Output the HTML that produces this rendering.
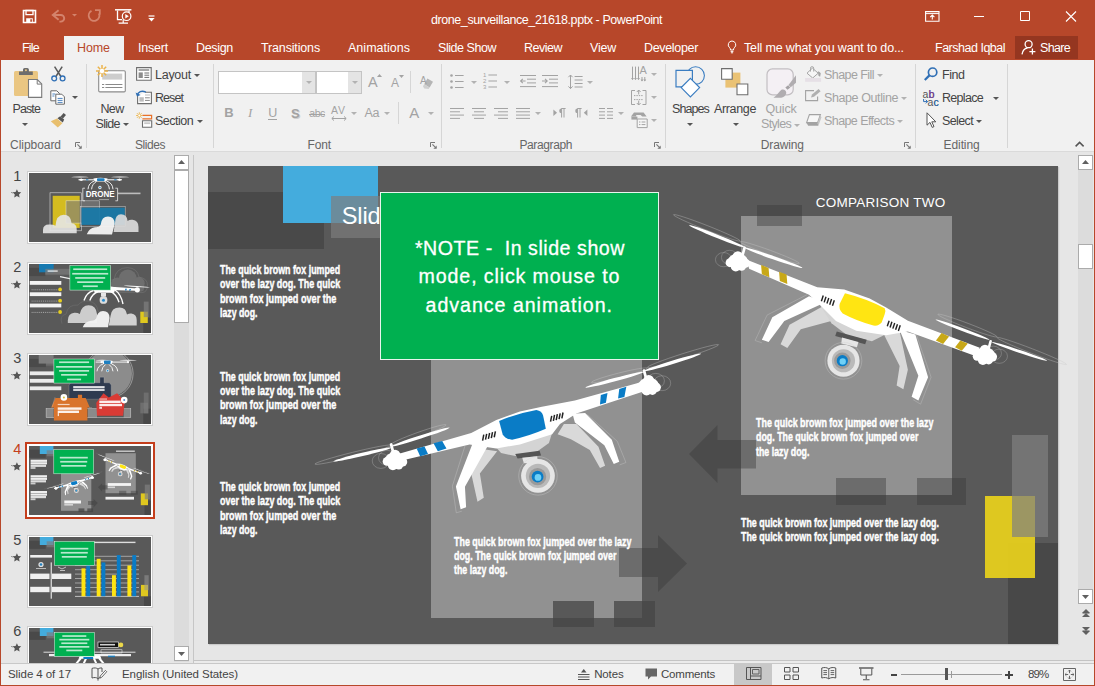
<!DOCTYPE html>
<html lang="en">
<head>
<meta charset="utf-8">
<title>drone_surveillance_21618.pptx - PowerPoint</title>
<style>
*{box-sizing:border-box;margin:0;padding:0}
html,body{width:1095px;height:686px;overflow:hidden;background:#e6e6e6}
body{font-family:"Liberation Sans",sans-serif;font-size:12px;color:#444;position:relative}
.abs{position:absolute}
svg{overflow:visible}
#win{position:absolute;left:0;top:0;width:1095px;height:686px;background:#e6e6e6;overflow:hidden}
.t{position:absolute;white-space:nowrap}
.bt{position:absolute;color:#fff;font-weight:bold;white-space:nowrap;transform-origin:0 0}
</style>
</head>
<body>
<div id="win">
<!-- part_top -->
<div class="abs" style="left:0px;top:0px;width:1095px;height:60px;background:#b7472a;"></div>
<div class="t" style="left:431.0px;top:11.5px;height:16px;line-height:16px;font-size:12.5px;color:#fff;letter-spacing:-0.42px;">drone_surveillance_21618.pptx - PowerPoint</div>
<svg class="abs" style="left:22px;top:9px;" width="16" height="15" viewBox="0 0 16 15"><path d="M1.5 1.5h12v12h-12z" fill="none" stroke="#fff" stroke-width="1.6"/><path d="M4 1.5h7v4.2h-7z" fill="none" stroke="#fff" stroke-width="1.3"/><path d="M4.2 9.3h6.6v4.2h-6.6z" fill="#fff"/><path d="M8.3 10.2h1.6v2.6h-1.6z" fill="#b7472a"/></svg>
<svg class="abs" style="left:51px;top:9px;" width="16" height="14" viewBox="0 0 16 14"><path d="M7.600 1.300l-5.800 4.700l5.800 4.700" fill="none" stroke="#d4836c" stroke-width="1.900"/><path d="M2.400 6h7.400a3.400 3.300 0 0 1 0 6.600h-1.400" fill="none" stroke="#d4836c" stroke-width="1.900"/></svg>
<svg class="abs" style="left:72.3px;top:14.200000000000001px;" width="5" height="2.4" viewBox="0 0 5 2.4"><path d="M0 0h5l-2.5 2.4z" fill="#d4836c"/></svg>
<svg class="abs" style="left:87px;top:9px;" width="14" height="14" viewBox="0 0 14 14"><path d="M4.500 1.900a5.300 5.300 0 1 0 7.400 2.600" fill="none" stroke="#d4836c" stroke-width="1.900"/><path d="M8 1.100h4.800v4.600" fill="none" stroke="#d4836c" stroke-width="1.800"/></svg>
<svg class="abs" style="left:114px;top:8px;" width="18" height="17" viewBox="0 0 18 17"><path d="M1 1.800h16.400" stroke="#fff" stroke-width="1.500"/><path d="M3.500 2.400v9.200h4.600M15 2.400v2" fill="none" stroke="#fff" stroke-width="1.300"/><circle cx="12.600" cy="8.200" r="4.300" fill="#b7472a" stroke="#fff" stroke-width="1.200"/><path d="M11.300 6l3.500 2.200l-3.500 2.200z" fill="#fff"/><path d="M9.200 12v2.600M4.600 15.200h9.400" stroke="#fff" stroke-width="1.200"/></svg>
<svg class="abs" style="left:148px;top:14.6px;" width="7" height="8" viewBox="0 0 7 8"><path d="M0.500 1h6" stroke="#fff" stroke-width="1.200"/><path d="M0.400 3h6.200l-3.100 3.600z" fill="#fff"/></svg>
<svg class="abs" style="left:925px;top:11px;" width="15" height="11" viewBox="0 0 15 11"><path d="M0.6 0.6h13.4v9.6h-13.4z" fill="none" stroke="#fff" stroke-width="1.1"/><path d="M0.6 2.6h13.4" stroke="#fff" stroke-width="1"/><path d="M7.3 8.6v-4.4M5.2 6.2l2.1-2.1l2.1 2.1" fill="none" stroke="#fff" stroke-width="1.1"/></svg>
<div class="abs" style="left:974px;top:16px;width:10px;height:1px;background:#fff;"></div>
<svg class="abs" style="left:1019px;top:10px;" width="12" height="12" viewBox="0 0 12 12"><path d="M1.500 1.500h9v9h-9z" fill="none" stroke="#fff" stroke-width="1"/></svg>
<svg class="abs" style="left:1065px;top:11px;" width="12" height="11" viewBox="0 0 12 11"><path d="M1 0.5l10 10M11 0.5l-10 10" stroke="#fff" stroke-width="1.1"/></svg>
<div class="abs" style="left:64px;top:36px;width:60px;height:25px;background:#f1f1f1;"></div>
<div class="t" style="left:77.0px;top:40.0px;height:16px;line-height:16px;font-size:12.5px;color:#b7472a;letter-spacing:-0.09px;">Home</div>
<div class="t" style="left:22.0px;top:40.0px;height:16px;line-height:16px;font-size:12.5px;color:#fff;letter-spacing:-0.79px;">File</div>
<div class="t" style="left:138.0px;top:40.0px;height:16px;line-height:16px;font-size:12.5px;color:#fff;letter-spacing:-0.21px;">Insert</div>
<div class="t" style="left:196.0px;top:40.0px;height:16px;line-height:16px;font-size:12.5px;color:#fff;letter-spacing:-0.32px;">Design</div>
<div class="t" style="left:261.0px;top:40.0px;height:16px;line-height:16px;font-size:12.5px;color:#fff;letter-spacing:-0.15px;">Transitions</div>
<div class="t" style="left:348.0px;top:40.0px;height:16px;line-height:16px;font-size:12.5px;color:#fff;letter-spacing:0.02px;">Animations</div>
<div class="t" style="left:438.0px;top:40.0px;height:16px;line-height:16px;font-size:12.5px;color:#fff;letter-spacing:-0.45px;">Slide Show</div>
<div class="t" style="left:524.0px;top:40.0px;height:16px;line-height:16px;font-size:12.5px;color:#fff;letter-spacing:-0.50px;">Review</div>
<div class="t" style="left:590.0px;top:40.0px;height:16px;line-height:16px;font-size:12.5px;color:#fff;letter-spacing:-0.22px;">View</div>
<div class="t" style="left:644.0px;top:40.0px;height:16px;line-height:16px;font-size:12.5px;color:#fff;letter-spacing:-0.33px;">Developer</div>
<div class="t" style="left:744.0px;top:40.0px;height:16px;line-height:16px;font-size:12.5px;color:#fff;letter-spacing:-0.16px;">Tell me what you want to do...</div>
<div class="t" style="left:935.0px;top:40.0px;height:16px;line-height:16px;font-size:12.5px;color:#fff;letter-spacing:-0.49px;">Farshad Iqbal</div>
<div class="abs" style="left:1015px;top:36px;width:63px;height:23px;background:#953620;"></div>
<div class="t" style="left:1040.0px;top:40.0px;height:16px;line-height:16px;font-size:12.5px;color:#fff;letter-spacing:-0.67px;">Share</div>
<svg class="abs" style="left:1021px;top:39px;" width="16" height="17" viewBox="0 0 16 17"><circle cx="7.6" cy="5.2" r="3.5" fill="none" stroke="#fff" stroke-width="1.3"/><path d="M1 15.4c0.6-4 3-6 5.4-6.4" fill="none" stroke="#fff" stroke-width="1.3"/><path d="M11.4 9.6v6M8.4 12.6h6" stroke="#fff" stroke-width="1.3"/></svg>
<svg class="abs" style="left:727px;top:40px;" width="10" height="15" viewBox="0 0 10 15"><path d="M5 1a3.8 3.8 0 0 0-2.3 6.8c0.6 0.6 0.8 1.2 0.8 2.2h3c0-1 0.2-1.6 0.8-2.2a3.8 3.8 0 0 0-2.3-6.8z" fill="none" stroke="#fff" stroke-width="1"/><path d="M3.6 11.4h2.8M3.9 12.8h2.2" stroke="#fff" stroke-width="1"/></svg>
<!-- part_ribbon -->
<div class="abs" style="left:1px;top:60px;width:1093px;height:91px;background:#f1f1f1;"></div>
<div class="abs" style="left:1px;top:151px;width:1093px;height:1px;background:#dadada;"></div>
<div class="abs" style="left:86px;top:64px;width:1px;height:84px;background:#d6d6d6;"></div>
<div class="abs" style="left:213px;top:64px;width:1px;height:84px;background:#d6d6d6;"></div>
<div class="abs" style="left:441px;top:64px;width:1px;height:84px;background:#d6d6d6;"></div>
<div class="abs" style="left:665px;top:64px;width:1px;height:84px;background:#d6d6d6;"></div>
<div class="abs" style="left:915px;top:64px;width:1px;height:84px;background:#d6d6d6;"></div>
<div class="abs" style="left:1007px;top:64px;width:1px;height:84px;background:#d6d6d6;"></div>
<svg class="abs" style="left:13px;top:67px;" width="30" height="32" viewBox="0 0 30 32"><rect x="1" y="3.900" width="24" height="25" rx="1.500" fill="#eac682"/><path d="M6 8.100v-3.600h4v-2a1.600 1.600 0 0 1 1.600-1.600h2.700a1.600 1.600 0 0 1 1.600 1.600v2h3.900v3.600z" fill="#6d6d6d"/><circle cx="12.950" cy="3.200" r="1" fill="#eac682"/><path d="M15.500 12.500h8.800l4.400 4.400v13.500h-13.200z" fill="#fff" stroke="#7a7a7a" stroke-width="1.100"/><path d="M24.200 12.700v4.400h4.400" fill="none" stroke="#7a7a7a" stroke-width="1"/></svg>
<div class="t" style="left:12.5px;top:100.6px;height:16px;line-height:16px;font-size:12.5px;color:#444;letter-spacing:-0.89px;">Paste</div>
<svg class="abs" style="left:22.0px;top:123.0px;" width="6" height="3" viewBox="0 0 6 3"><path d="M0 0h6l-3.0 3z" fill="#555"/></svg>
<svg class="abs" style="left:51px;top:66px;" width="15" height="16" viewBox="0 0 15 16"><path d="M3.6 0.6l6.6 10.4M11.2 0.6l-6.6 10.4" stroke="#5a5a5a" stroke-width="1.5" fill="none"/><circle cx="3.2" cy="12.4" r="2.4" fill="none" stroke="#2f6fb5" stroke-width="1.3"/><circle cx="11.6" cy="12.4" r="2.4" fill="none" stroke="#2f6fb5" stroke-width="1.3"/></svg>
<svg class="abs" style="left:50px;top:90px;" width="16" height="15" viewBox="0 0 16 15"><path d="M0.8 0.8h6l2.6 2.6v7.4h-8.6z" fill="#fff" stroke="#6a6a6a" stroke-width="1"/><path d="M5.8 4.2h6l2.6 2.6v7.4h-8.6z" fill="#fff" stroke="#6a6a6a" stroke-width="1"/><path d="M7.6 8.4h5M7.6 10.4h5M7.6 12.4h5" stroke="#3a76b8" stroke-width="0.9"/><path d="M2.4 4h3M2.4 6h2" stroke="#3a76b8" stroke-width="0.9"/></svg>
<svg class="abs" style="left:71.5px;top:96.0px;" width="6" height="3" viewBox="0 0 6 3"><path d="M0 0h6l-3.0 3z" fill="#555"/></svg>
<svg class="abs" style="left:50px;top:112px;" width="17" height="16" viewBox="0 0 17 16"><path d="M10.6 4.6l3-3.6l2.4 2l-3 3.6z" fill="#555"/><path d="M7.4 6.2l2.8-2l4 3.4l-1.4 3z" fill="#555"/><path d="M0.8 9.2l6.2-2.6l5.4 4.6l-4.6 4.2z" fill="#e8bf6e"/></svg>
<div class="t" style="left:10.0px;top:136.5px;height:16px;line-height:16px;font-size:12px;color:#666;letter-spacing:-0.04px;">Clipboard</div>
<svg class="abs" style="left:75px;top:141.5px;" width="7" height="7" viewBox="0 0 7 7"><path d="M0.500 5v-4.500h4.500" fill="none" stroke="#777" stroke-width="1"/><path d="M2.400 2.400l3.800 3.800" fill="none" stroke="#777" stroke-width="1.100"/><path d="M3.400 6.700h3.300v-3.300z" fill="#777"/></svg>
<svg class="abs" style="left:96px;top:65px;" width="31" height="29" viewBox="0 0 31 29"><rect x="2.700" y="5.700" width="26.600" height="21.200" rx="1.200" fill="#fff" stroke="#8a8a8a" stroke-width="1.100"/><path d="M6.200 8.600h20v6h-20z" fill="#cdcdcd"/><path d="M6 19.500h2.200M9.400 19.500h17M6 22.500h2.200M9.400 22.500h17" stroke="#8a8a8a" stroke-width="1"/><g stroke="#ebb34a" stroke-width="1.500"><path d="M6 0v12M0 6h12M1.800 1.800l8.400 8.400M10.200 1.800l-8.400 8.400"/></g><circle cx="6" cy="6" r="2.300" fill="#fff"/></svg>
<div class="t" style="left:100.5px;top:100.6px;height:16px;line-height:16px;font-size:12.5px;color:#444;letter-spacing:-0.67px;">New</div>
<div class="t" style="left:95.5px;top:116.4px;height:16px;line-height:16px;font-size:12.5px;color:#444;letter-spacing:-0.70px;">Slide</div>
<svg class="abs" style="left:122.5px;top:123.3px;" width="6" height="3" viewBox="0 0 6 3"><path d="M0 0h6l-3.0 3z" fill="#555"/></svg>
<svg class="abs" style="left:136px;top:67px;" width="16" height="14" viewBox="0 0 16 14"><path d="M0.6 0.6h14.6v12.6h-14.6z" fill="#fff" stroke="#6e6e6e" stroke-width="1.1"/><path d="M2.6 3h10.6" stroke="#6e6e6e" stroke-width="1.2"/><path d="M2.6 5.4h4.2v5.6h-4.2z" fill="#8c8c8c"/><path d="M8.4 6h4.8M8.4 8.2h4.8M8.4 10.4h4.8" stroke="#6e6e6e" stroke-width="1"/></svg>
<div class="t" style="left:155.0px;top:66.8px;height:16px;line-height:16px;font-size:12.5px;color:#444;letter-spacing:-0.26px;">Layout</div>
<svg class="abs" style="left:193.5px;top:74.0px;" width="6" height="3" viewBox="0 0 6 3"><path d="M0 0h6l-3.0 3z" fill="#555"/></svg>
<svg class="abs" style="left:136px;top:90px;" width="16" height="14" viewBox="0 0 16 14"><path d="M1.600 5.800v7.800h13.800v-11.400h-6.400" fill="#fff" stroke="#6e6e6e" stroke-width="1.100"/><path d="M3.400 7.200h4.400v4.400h-4.400z" fill="#bdbdbd"/><path d="M9 7.800h4.800M9 10.400h4.800" stroke="#8a8a8a" stroke-width="1"/><path d="M9 5h5" stroke="#bdbdbd" stroke-width="1"/><path d="M1.400 5.200c0.400-3.400 4.400-5.200 8.400-3" fill="none" stroke="#2f6fb5" stroke-width="1.500"/><path d="M-0.400 2.600l1.400 4l3.600-1.700z" fill="#2f6fb5"/></svg>
<div class="t" style="left:155.0px;top:89.8px;height:16px;line-height:16px;font-size:12.5px;color:#444;letter-spacing:-0.93px;">Reset</div>
<svg class="abs" style="left:136px;top:112px;" width="17" height="16" viewBox="0 0 17 16"><path d="M6.400 3.400h9.200v3.400h-9.200" fill="none" stroke="#e8712a" stroke-width="1.200"/><path d="M6.500 8.700h9.200v6.500h-9.200z" fill="#fff" stroke="#6e6e6e" stroke-width="1.100"/><path d="M8.200 10.300h6v1.800h-6z" fill="#c8c8c8"/><g stroke="#ebb34a" stroke-width="0.900"><path d="M3.300 0.300v6.400M0.100 3.500h6.400M1 1.200l4.600 4.600M5.600 1.200l-4.600 4.600"/></g><circle cx="3.300" cy="3.500" r="1.100" fill="#fff"/></svg>
<div class="t" style="left:155.0px;top:112.8px;height:16px;line-height:16px;font-size:12.5px;color:#444;letter-spacing:-0.50px;">Section</div>
<svg class="abs" style="left:196.5px;top:120.0px;" width="6" height="3" viewBox="0 0 6 3"><path d="M0 0h6l-3.0 3z" fill="#555"/></svg>
<div class="t" style="left:135.0px;top:136.5px;height:16px;line-height:16px;font-size:12px;color:#666;letter-spacing:-0.45px;">Slides</div>
<div class="abs" style="left:218px;top:71px;width:98px;height:23px;background:#fff;border:1px solid #c4c4c4"></div>
<div class="abs" style="left:302px;top:72px;width:13px;height:21px;background:#e4e4e4;"></div>
<svg class="abs" style="left:305.5px;top:80.5px;" width="6" height="3" viewBox="0 0 6 3"><path d="M0 0h6l-3.0 3z" fill="#b2b2b2"/></svg>
<div class="abs" style="left:316px;top:71px;width:46px;height:23px;background:#fff;border:1px solid #c4c4c4"></div>
<div class="abs" style="left:348px;top:72px;width:13px;height:21px;background:#e4e4e4;"></div>
<svg class="abs" style="left:351.5px;top:80.5px;" width="6" height="3" viewBox="0 0 6 3"><path d="M0 0h6l-3.0 3z" fill="#b2b2b2"/></svg>
<div class="t" style="left:368.0px;top:72.5px;height:19px;line-height:19px;font-size:14.5px;color:#a3a3a3;letter-spacing:0.33px;">A</div>
<svg class="abs" style="left:377px;top:74px;" width="5" height="3" viewBox="0 0 5 3"><path d="M0 3h5l-2.5-3z" fill="#a3a3a3"/></svg>
<div class="t" style="left:391.0px;top:75.0px;height:16px;line-height:16px;font-size:12px;color:#a3a3a3;letter-spacing:-0.00px;">A</div>
<svg class="abs" style="left:399px;top:75px;" width="5" height="3" viewBox="0 0 5 3"><path d="M0 0h5l-2.5 3z" fill="#a3a3a3"/></svg>
<div class="abs" style="left:410px;top:71px;width:1px;height:22px;background:#d6d6d6;"></div>
<svg class="abs" style="left:420px;top:75px;" width="15" height="15" viewBox="0 0 15 15"><path d="M7.4 3.6l5.6 3.2l-3.4 5.6l-5.4-3.2z" fill="#b5b5b5"/><path d="M4.2 9.2l5.4 3.2l-1 1.6l-4.4-0.4l-1.2-2.4z" fill="#d0d0d0"/></svg>
<div class="t" style="left:420.0px;top:74.0px;height:13px;line-height:13px;font-size:10px;color:#a3a3a3;letter-spacing:0.33px;">A</div>
<div class="t" style="left:224.3px;top:104.3px;height:17px;line-height:17px;font-size:13px;color:#a3a3a3;letter-spacing:-1.39px;font-weight:bold;">B</div>
<div class="t" style="left:248.0px;top:104.3px;height:17px;line-height:17px;font-size:13px;color:#a3a3a3;letter-spacing:1.39px;font-style:italic;font-family:'Liberation Serif',serif;">I</div>
<div class="t" style="left:268.3px;top:104.5px;height:16px;line-height:16px;font-size:12.5px;color:#a3a3a3;letter-spacing:-0.73px;">U</div>
<div class="abs" style="left:268px;top:119px;width:9px;height:1px;background:#a3a3a3;"></div>
<div class="t" style="left:292.0px;top:105.5px;height:17px;line-height:17px;font-size:13px;color:#cfcfcf;letter-spacing:-0.67px;font-weight:bold;">S</div>
<div class="t" style="left:291.0px;top:104.5px;height:17px;line-height:17px;font-size:13px;color:#a3a3a3;letter-spacing:-0.67px;font-weight:bold;">S</div>
<div class="t" style="left:309.3px;top:106.2px;height:14px;line-height:14px;font-size:10.5px;color:#a3a3a3;letter-spacing:-0.44px;">abc</div>
<div class="abs" style="left:309px;top:114px;width:16px;height:1px;background:#a3a3a3;"></div>
<div class="t" style="left:331.0px;top:102.8px;height:14px;line-height:14px;font-size:10.5px;color:#a3a3a3;letter-spacing:0.89px;">AV</div>
<svg class="abs" style="left:331px;top:116px;" width="16" height="5" viewBox="0 0 16 5"><path d="M1 2.5h14M3 0.4l-2.2 2.1l2.2 2.1M13 0.4l2.2 2.1l-2.2 2.1" fill="none" stroke="#a3a3a3" stroke-width="1"/></svg>
<svg class="abs" style="left:351.0px;top:112.0px;" width="6" height="3" viewBox="0 0 6 3"><path d="M0 0h6l-3.0 3z" fill="#b2b2b2"/></svg>
<div class="t" style="left:364.6px;top:104.8px;height:16px;line-height:16px;font-size:12.5px;color:#a3a3a3;letter-spacing:-0.39px;">Aa</div>
<svg class="abs" style="left:383.5px;top:112.0px;" width="6" height="3" viewBox="0 0 6 3"><path d="M0 0h6l-3.0 3z" fill="#b2b2b2"/></svg>
<div class="abs" style="left:398px;top:102px;width:1px;height:22px;background:#d6d6d6;"></div>
<div class="t" style="left:409.3px;top:102.6px;height:20px;line-height:20px;font-size:15px;color:#a3a3a3;letter-spacing:-0.21px;">A</div>
<svg class="abs" style="left:427.5px;top:112.0px;" width="6" height="3" viewBox="0 0 6 3"><path d="M0 0h6l-3.0 3z" fill="#b2b2b2"/></svg>
<div class="t" style="left:307.5px;top:136.5px;height:16px;line-height:16px;font-size:12px;color:#666;letter-spacing:-0.13px;">Font</div>
<svg class="abs" style="left:430px;top:141.5px;" width="7" height="7" viewBox="0 0 7 7"><path d="M0.500 5v-4.500h4.500" fill="none" stroke="#777" stroke-width="1"/><path d="M2.400 2.400l3.800 3.800" fill="none" stroke="#777" stroke-width="1.100"/><path d="M3.400 6.700h3.300v-3.300z" fill="#777"/></svg>
<svg class="abs" style="left:449.5px;top:73.5px;" width="14" height="15" viewBox="0 0 14 15"><circle cx="1.5" cy="1.5" r="1.3" fill="#a3a3a3"/><path d="M5 1.5h8.6" stroke="#a3a3a3" stroke-width="1"/><circle cx="1.5" cy="7.5" r="1.3" fill="#a3a3a3"/><path d="M5 7.5h8.6" stroke="#a3a3a3" stroke-width="1"/><circle cx="1.5" cy="13.5" r="1.3" fill="#a3a3a3"/><path d="M5 13.5h8.6" stroke="#a3a3a3" stroke-width="1"/></svg>
<svg class="abs" style="left:470.5px;top:81.0px;" width="6" height="3" viewBox="0 0 6 3"><path d="M0 0h6l-3.0 3z" fill="#b2b2b2"/></svg>
<svg class="abs" style="left:483px;top:73px;" width="15" height="16" viewBox="0 0 15 16"><text x="0" y="4.2" font-size="6" fill="#a3a3a3" font-family="Liberation Sans, sans-serif">1</text><path d="M5.4 2h8.6" stroke="#a3a3a3" stroke-width="1"/><text x="0" y="10.2" font-size="6" fill="#a3a3a3" font-family="Liberation Sans, sans-serif">2</text><path d="M5.4 8h8.6" stroke="#a3a3a3" stroke-width="1"/><text x="0" y="16.2" font-size="6" fill="#a3a3a3" font-family="Liberation Sans, sans-serif">3</text><path d="M5.4 14h8.6" stroke="#a3a3a3" stroke-width="1"/></svg>
<svg class="abs" style="left:504.0px;top:81.0px;" width="6" height="3" viewBox="0 0 6 3"><path d="M0 0h6l-3.0 3z" fill="#b2b2b2"/></svg>
<svg class="abs" style="left:520px;top:75px;" width="16" height="13" viewBox="0 0 16 13"><path d="M0 0.5h16M7 4.2h9M7 7.9h9M0 11.6h16" stroke="#a3a3a3" stroke-width="1"/><path d="M0.6 6h5M2.8 3.8l-2.2 2.2l2.2 2.2" fill="none" stroke="#a3a3a3" stroke-width="1.1"/></svg>
<svg class="abs" style="left:542px;top:75px;" width="16" height="13" viewBox="0 0 16 13"><path d="M0 0.5h16M7 4.2h9M7 7.9h9M0 11.6h16" stroke="#a3a3a3" stroke-width="1"/><path d="M0 6h5M3 3.8l2.2 2.2l-2.2 2.2" fill="none" stroke="#a3a3a3" stroke-width="1.1"/></svg>
<svg class="abs" style="left:567.5px;top:74px;" width="15" height="16" viewBox="0 0 15 16"><path d="M2.5 1v13.6M0.4 3.2l2.1-2.2l2.1 2.2M0.4 12.4l2.1 2.2l2.1-2.2" fill="none" stroke="#a3a3a3" stroke-width="1"/><path d="M6.6 2.5h8M6.6 6h8M6.6 9.5h8M6.6 13h8" stroke="#a3a3a3" stroke-width="1"/></svg>
<svg class="abs" style="left:586.5px;top:81.0px;" width="6" height="3" viewBox="0 0 6 3"><path d="M0 0h6l-3.0 3z" fill="#b2b2b2"/></svg>
<svg class="abs" style="left:631px;top:66px;" width="16" height="16" viewBox="0 0 16 16"><path d="M1.5 0.6v13M4.5 0.6v13M7.5 0.6v13" stroke="#a3a3a3" stroke-width="1"/><path d="M0 12l1.5 2l1.5-2zM3 12l1.5 2l1.5-2zM6 12l1.5 2l1.5-2z" fill="#a3a3a3"/><path d="M11 11v4M13.8 11v4" stroke="#a3a3a3" stroke-width="1" /><path d="M9.6 13.6l1.4 1.8l1.4-1.8zM12.4 13.6l1.4 1.8l1.4-1.8z" fill="#a3a3a3"/></svg>
<div class="t" style="left:639.5px;top:63.0px;height:14px;line-height:14px;font-size:11px;color:#a3a3a3;letter-spacing:0.66px;">A</div>
<svg class="abs" style="left:650.5px;top:73.0px;" width="6" height="3" viewBox="0 0 6 3"><path d="M0 0h6l-3.0 3z" fill="#b2b2b2"/></svg>
<svg class="abs" style="left:631px;top:89.5px;" width="16" height="15" viewBox="0 0 16 15"><path d="M4 0.5h-3.5v14h3.5M11.5 0.5h3.5v14h-3.5" fill="none" stroke="#a3a3a3" stroke-width="1"/><path d="M3 5.6h9.4M3 9.6h9.4" stroke="#a3a3a3" stroke-width="1" stroke-dasharray="1.4 1"/><path d="M7.7 0v4.4M5.8 2l1.9-2l1.9 2M7.7 15v-4.4M5.8 13l1.9 2l1.9-2" fill="none" stroke="#a3a3a3" stroke-width="1"/></svg>
<svg class="abs" style="left:650.5px;top:96.3px;" width="6" height="3" viewBox="0 0 6 3"><path d="M0 0h6l-3.0 3z" fill="#b2b2b2"/></svg>
<svg class="abs" style="left:631px;top:112px;" width="17" height="16" viewBox="0 0 17 16"><path d="M0 4.6l3-4h9.6l3 4h-4.4l-1.6-1.6h-4.4v1.6z" fill="#a3a3a3"/><path d="M0.4 4.6h6v3h-6z" fill="#a3a3a3"/><path d="M6.2 7h10v8.6h-10z" fill="#f6f6f6" stroke="#a3a3a3" stroke-width="1"/><path d="M8 10h1.4M10.6 10h3.8M8 12.6h1.4M10.6 12.6h3.8" stroke="#a3a3a3" stroke-width="1"/></svg>
<svg class="abs" style="left:650.5px;top:119.3px;" width="6" height="3" viewBox="0 0 6 3"><path d="M0 0h6l-3.0 3z" fill="#b2b2b2"/></svg>
<svg class="abs" style="left:450px;top:108px;" width="16" height="13.2" viewBox="0 0 16 13.2"><path d="M0 0.5h14" stroke="#a3a3a3" stroke-width="1"/><path d="M0 3.8h10" stroke="#a3a3a3" stroke-width="1"/><path d="M0 7.1h14" stroke="#a3a3a3" stroke-width="1"/><path d="M0 10.399999999999999h10" stroke="#a3a3a3" stroke-width="1"/></svg>
<svg class="abs" style="left:472px;top:108px;" width="16" height="13.2" viewBox="0 0 16 13.2"><path d="M0 0.5h14" stroke="#a3a3a3" stroke-width="1"/><path d="M2 3.8h10" stroke="#a3a3a3" stroke-width="1"/><path d="M0 7.1h14" stroke="#a3a3a3" stroke-width="1"/><path d="M2 10.399999999999999h10" stroke="#a3a3a3" stroke-width="1"/></svg>
<svg class="abs" style="left:494px;top:108px;" width="16" height="13.2" viewBox="0 0 16 13.2"><path d="M0 0.5h14" stroke="#a3a3a3" stroke-width="1"/><path d="M4 3.8h10" stroke="#a3a3a3" stroke-width="1"/><path d="M0 7.1h14" stroke="#a3a3a3" stroke-width="1"/><path d="M4 10.399999999999999h10" stroke="#a3a3a3" stroke-width="1"/></svg>
<svg class="abs" style="left:516px;top:108px;" width="16" height="13.2" viewBox="0 0 16 13.2"><path d="M0 0.5h14" stroke="#a3a3a3" stroke-width="1"/><path d="M0 3.8h14" stroke="#a3a3a3" stroke-width="1"/><path d="M0 7.1h14" stroke="#a3a3a3" stroke-width="1"/><path d="M0 10.399999999999999h14" stroke="#a3a3a3" stroke-width="1"/></svg>
<svg class="abs" style="left:534.5px;top:112.0px;" width="6" height="3" viewBox="0 0 6 3"><path d="M0 0h6l-3.0 3z" fill="#b2b2b2"/></svg>
<svg class="abs" style="left:553px;top:108px;" width="13" height="10" viewBox="0 0 13 10"><path d="M0.4 1.6l3.6 3.2l-3.6 3.2z" fill="#a3a3a3"/><path d="M8.4 0.5h4.2M8.6 0.5v9M11 0.5v9" stroke="#a3a3a3" stroke-width="1" fill="none"/><path d="M8.6 0.5a2.4 2.4 0 0 0 0 4.8z" fill="#a3a3a3"/></svg>
<svg class="abs" style="left:574.5px;top:108px;" width="13" height="10" viewBox="0 0 13 10"><path d="M12.4 1.6l-3.6 3.2l3.6 3.2z" fill="#a3a3a3"/><path d="M2.4 0.5h4.2M2.6 0.5v9M5 0.5v9" stroke="#a3a3a3" stroke-width="1" fill="none"/><path d="M2.6 0.5a2.4 2.4 0 0 0 0 4.8z" fill="#a3a3a3"/></svg>
<svg class="abs" style="left:599px;top:108px;" width="14" height="11" viewBox="0 0 14 11"><path d="M0 0.5h6M8 0.5h6M0 3.8h6M8 3.8h6M0 7.1h6M8 7.1h6M0 10.4h6M8 10.4h6" stroke="#a3a3a3" stroke-width="1"/></svg>
<svg class="abs" style="left:617.5px;top:112.0px;" width="6" height="3" viewBox="0 0 6 3"><path d="M0 0h6l-3.0 3z" fill="#b2b2b2"/></svg>
<div class="t" style="left:519.4px;top:136.5px;height:16px;line-height:16px;font-size:12px;color:#666;letter-spacing:-0.38px;">Paragraph</div>
<svg class="abs" style="left:654px;top:141.5px;" width="7" height="7" viewBox="0 0 7 7"><path d="M0.500 5v-4.500h4.500" fill="none" stroke="#777" stroke-width="1"/><path d="M2.400 2.400l3.800 3.800" fill="none" stroke="#777" stroke-width="1.100"/><path d="M3.400 6.700h3.300v-3.300z" fill="#777"/></svg>
<svg class="abs" style="left:675px;top:66px;" width="31" height="31" viewBox="0 0 31 31"><circle cx="20.6" cy="9.6" r="8.8" fill="#f1f1f1" stroke="#3b7dc1" stroke-width="1.1"/><path d="M1 4.4h16.4v16.4h-16.4z" fill="#f1f1f1" stroke="#3b7dc1" stroke-width="1.2"/><path d="M15.4 12.4l9.2 9.2l-9.2 9.2l-9.2-9.2z" fill="#fff" stroke="#3b7dc1" stroke-width="1.2"/></svg>
<div class="t" style="left:672.0px;top:100.6px;height:16px;line-height:16px;font-size:12.5px;color:#444;letter-spacing:-0.95px;">Shapes</div>
<svg class="abs" style="left:687.0px;top:123.3px;" width="6" height="3" viewBox="0 0 6 3"><path d="M0 0h6l-3.0 3z" fill="#555"/></svg>
<svg class="abs" style="left:721px;top:68px;" width="28" height="28" viewBox="0 0 28 28"><path d="M4.4 4.6h15v15h-15z" fill="#eac274"/><path d="M8 8h10.6v10.6h-10.6z" fill="#eac274"/><path d="M0.6 0.6h10.6v10.6h-10.6z" fill="#fff" stroke="#6e6e6e" stroke-width="1.1"/><path d="M16 16h10.8v10.8h-10.8z" fill="#fff" stroke="#6e6e6e" stroke-width="1.1"/></svg>
<div class="t" style="left:714.0px;top:100.6px;height:16px;line-height:16px;font-size:12.5px;color:#444;letter-spacing:-0.35px;">Arrange</div>
<svg class="abs" style="left:732.5px;top:123.3px;" width="6" height="3" viewBox="0 0 6 3"><path d="M0 0h6l-3.0 3z" fill="#555"/></svg>
<svg class="abs" style="left:766px;top:68px;" width="31" height="30" viewBox="0 0 31 30"><rect x="1" y="0.900" width="26.200" height="26" rx="5.500" fill="#f4f0f4" stroke="#c2bec2" stroke-width="1.200"/><path d="M30 7.300v7.400l-5.300 4.600l-2.200-2.400z" fill="#b0adb0"/><path d="M22.100 17.300l2.300 2.300l-2.900 2.200l-2.200-2.200z" fill="#a5a2a5"/><path d="M7.400 29.700c4-2.500 5.500-5.700 8-7.900c2.400-0.900 4.800 0.200 4.900 3.300c-0.400 2.700-2.600 4.600-5.200 4.600z" fill="#b0adb0"/></svg>
<div class="t" style="left:765.5px;top:100.6px;height:16px;line-height:16px;font-size:12.5px;color:#a3a3a3;letter-spacing:-0.19px;">Quick</div>
<div class="t" style="left:761.0px;top:116.4px;height:16px;line-height:16px;font-size:12.5px;color:#a3a3a3;letter-spacing:-0.67px;">Styles</div>
<svg class="abs" style="left:793.5px;top:123.5px;" width="6" height="3" viewBox="0 0 6 3"><path d="M0 0h6l-3.0 3z" fill="#b2b2b2"/></svg>
<svg class="abs" style="left:805px;top:65px;" width="17" height="17" viewBox="0 0 17 17"><path d="M7.400 3.100l5.800 5.100l-5.500 4.800l-5.700-4.800z" fill="#f6f6f6" stroke="#a3a3a3" stroke-width="1"/><path d="M5.500 6.600v-3.400a1.600 1.600 0 0 1 3.200 0v3.400" fill="none" stroke="#a3a3a3" stroke-width="0.900"/><path d="M12.900 6.200c1.800 0.600 2.900 1.600 2.800 2.600l-0.600 2.900l-1.600-1z" fill="#a3a3a3"/><path d="M0.100 13h16v3.800h-16z" fill="#e6e0e6"/></svg>
<div class="t" style="left:824.0px;top:66.8px;height:16px;line-height:16px;font-size:12.5px;color:#a3a3a3;letter-spacing:-0.56px;">Shape Fill</div>
<svg class="abs" style="left:877.0px;top:74.0px;" width="6" height="3" viewBox="0 0 6 3"><path d="M0 0h6l-3.0 3z" fill="#b2b2b2"/></svg>
<svg class="abs" style="left:805px;top:88px;" width="17" height="14" viewBox="0 0 17 14"><path d="M9 2.6h-8.4v10h12v-4" fill="none" stroke="#a3a3a3" stroke-width="1.1"/><path d="M6 9.6l1-3l6.6-5.600l2 2.200l-6.600 5.600z" fill="#b0b0b0"/></svg>
<div class="t" style="left:824.0px;top:89.8px;height:16px;line-height:16px;font-size:12.5px;color:#a3a3a3;letter-spacing:-0.40px;">Shape Outline</div>
<svg class="abs" style="left:900.7px;top:97.0px;" width="6" height="3" viewBox="0 0 6 3"><path d="M0 0h6l-3.0 3z" fill="#b2b2b2"/></svg>
<svg class="abs" style="left:805px;top:114px;" width="17" height="13" viewBox="0 0 17 13"><path d="M4.400 0.600h11l-2.800 8h-11z" fill="#f7f7f7" stroke="#a3a3a3" stroke-width="1.1"/><path d="M1.600 9l1.600 2.800h10.200l-0.800-2.800z" fill="#a3a3a3"/><path d="M15.400 0.800l1 2.800l-3 8.200l-0.800-2.800z" fill="#c4c4c4"/></svg>
<div class="t" style="left:824.0px;top:112.8px;height:16px;line-height:16px;font-size:12.5px;color:#a3a3a3;letter-spacing:-0.58px;">Shape Effects</div>
<svg class="abs" style="left:897.0px;top:120.0px;" width="6" height="3" viewBox="0 0 6 3"><path d="M0 0h6l-3.0 3z" fill="#b2b2b2"/></svg>
<div class="t" style="left:760.8px;top:136.5px;height:16px;line-height:16px;font-size:12px;color:#666;letter-spacing:-0.15px;">Drawing</div>
<svg class="abs" style="left:903.5px;top:141.5px;" width="7" height="7" viewBox="0 0 7 7"><path d="M0.500 5v-4.500h4.500" fill="none" stroke="#777" stroke-width="1"/><path d="M2.400 2.400l3.800 3.800" fill="none" stroke="#777" stroke-width="1.100"/><path d="M3.400 6.700h3.300v-3.300z" fill="#777"/></svg>
<svg class="abs" style="left:924px;top:67px;" width="14" height="14" viewBox="0 0 14 14"><circle cx="8.6" cy="5.2" r="4.2" fill="#f1f1f1" stroke="#2f6fb5" stroke-width="1.7"/><path d="M5.4 8.400l-4.600 4.600" stroke="#2f6fb5" stroke-width="2.2"/></svg>
<div class="t" style="left:942.0px;top:66.8px;height:16px;line-height:16px;font-size:12.5px;color:#444;letter-spacing:-0.48px;">Find</div>
<div class="t" style="left:922.6px;top:87.0px;height:14px;line-height:14px;font-size:10.5px;color:#555;letter-spacing:0.16px;">ab</div>
<div class="t" style="left:928.8px;top:87.0px;height:14px;line-height:14px;font-size:10.5px;color:#7b3fa0;letter-spacing:-0.24px;">b</div>
<div class="t" style="left:927.4px;top:94.8px;height:14px;line-height:14px;font-size:10.5px;color:#555;letter-spacing:0.21px;">ac</div>
<div class="t" style="left:933.4px;top:94.8px;height:14px;line-height:14px;font-size:10.5px;color:#2f6fb5;letter-spacing:0.25px;">c</div>
<svg class="abs" style="left:922.5px;top:99px;" width="5" height="5" viewBox="0 0 5 5"><path d="M0.600 0v2.600h4M2.800 0.800l1.800 1.800l-1.800 1.800" fill="none" stroke="#2f6fb5" stroke-width="1"/></svg>
<div class="t" style="left:942.0px;top:89.8px;height:16px;line-height:16px;font-size:12.5px;color:#444;letter-spacing:-0.69px;">Replace</div>
<svg class="abs" style="left:992.5px;top:97.0px;" width="6" height="3" viewBox="0 0 6 3"><path d="M0 0h6l-3.0 3z" fill="#555"/></svg>
<svg class="abs" style="left:926px;top:112px;" width="11" height="16" viewBox="0 0 11 16"><path d="M1 0.800v12.400l3-2.800l2.200 5l1.800-0.800l-2.200-4.800h4z" fill="#fff" stroke="#555" stroke-width="1"/></svg>
<div class="t" style="left:942.0px;top:112.8px;height:16px;line-height:16px;font-size:12.5px;color:#444;letter-spacing:-0.62px;">Select</div>
<svg class="abs" style="left:975.5px;top:120.0px;" width="6" height="3" viewBox="0 0 6 3"><path d="M0 0h6l-3.0 3z" fill="#555"/></svg>
<div class="t" style="left:943.6px;top:136.5px;height:16px;line-height:16px;font-size:12px;color:#666;letter-spacing:-0.10px;">Editing</div>
<svg class="abs" style="left:1075px;top:141px;" width="9" height="6" viewBox="0 0 9 6"><path d="M0.600 5.400l4-4l4 4" fill="none" stroke="#555" stroke-width="1.5"/></svg>
<!-- part_left -->
<div class="abs" style="left:1px;top:152px;width:192px;height:511px;background:#e6e6e6;overflow:hidden"><div class="abs" style="left:-1px;top:-152px;width:200px;height:700px">
<div class="abs" style="left:27px;top:171.3px;width:126px;height:73px;background:#fff;border:1px solid #cdcdcd"></div>
<svg class="abs" style="left:29px;top:173.3px;overflow:hidden" width="122" height="68.6" viewBox="0 0 122 68.6"><rect width="122" height="69" fill="#595959"/><rect x="23.7" y="22.8" width="27.0" height="32.1" fill="#d4bc20" /><rect x="21.0" y="19.8" width="31.5" height="38.0" fill="none" stroke="#f0f0f0" stroke-width="0.600" opacity="0.850"/><rect x="37.0" y="27.8" width="33.3" height="22.3" fill="rgba(125,125,125,0.620)" stroke="#eee" stroke-width="0.600" stroke-opacity="0.700"/><rect x="52.5" y="34.7" width="43.3" height="17.2" fill="rgba(22,120,168,0.920)" /><rect x="51.6" y="33.3" width="44.6" height="20.1" fill="none" stroke="#e8e8e8" stroke-width="0.500" opacity="0.800"/><path d="M14 60.200V57Q14 51.500 20 51.500Q24 51.300 26.500 52.800Q27.300 41.800 34.700 41.800Q41.800 41.800 42.600 50.200Q47.700 50.600 47.700 56V60.200z" fill="#e6e6e6" opacity="0.900"/><path d="M84.600 59L86 50Q86.200 41.200 92 41.200Q98 41.200 98.600 48Q100.500 46.400 103.600 46.800Q109.500 47.600 109.500 54V59z" fill="#dadada" opacity="0.920"/><path d="M57.800 61.200Q60 55 66 54.200Q70 54.600 71.600 52Q72.600 43.600 79 43.600Q85.700 43.800 85.700 51L83 61.400z" fill="#f3f3f3" opacity="0.960"/><ellipse cx="51" cy="4" rx="8.600" ry="0.500" fill="#fff"/><ellipse cx="91.100" cy="4" rx="8.900" ry="0.500" fill="#fff"/><path d="M49.500 6.800h43.400" stroke="#fff" stroke-width="1"/><path d="M49.500 6.800l2.700-1.200l2.700 1.200l-2.700 1.200zM88 6.800l2.500-1.200l2.500 1.200l-2.500 1.200z" fill="#fff"/><path d="M57 6.800h2.400M85.200 6.800h2.400" stroke="#1f7fbf" stroke-width="1"/><path d="M64.400 5.600q7-1.600 14.200 0l-1.400 3h-11.400z" fill="#fff"/><rect x="68" y="5.200" width="7.600" height="2.800" rx="0.800" fill="#1f7fbf"/><path d="M65.400 8q-6 2-6.400 8.300M67.500 8.500q-4.500 2.500-4.900 7.800M77.600 8q6 2 6.400 8.300M75.500 8.500q4.500 2.500 4.900 7.800" fill="none" stroke="#fff" stroke-width="0.900"/><circle cx="70.900" cy="14.500" r="1.700" fill="#e6e6e6"/><circle cx="70.900" cy="14.500" r="0.800" fill="#1f7fbf"/><path d="M56 15.200h-2.200v12.600h2.200M86.400 15.200h2.200v12.600h-2.200" fill="none" stroke="#fff" stroke-width="0.700"/><text x="71.200" y="24" text-anchor="middle" font-family="Liberation Sans, sans-serif" font-weight="bold" font-size="8.800" fill="#fff" textLength="29" lengthAdjust="spacingAndGlyphs">DRONE</text><rect x="89.0" y="19.6" width="22.5" height="1.6" fill="#fff" opacity="0.6"/><rect x="70.0" y="26.1" width="10.0" height="1" fill="#fff" opacity="0.45"/></svg>
<div class="t" style="left:4.0px;top:167.4px;height:19px;line-height:19px;font-size:14.6px;color:#444;width:17.300px;text-align:right;">1</div>
<svg class="abs" style="left:11px;top:188.60000000000002px;" width="10" height="9" viewBox="0 0 10 9"><path d="M5.900 0.200l1.300 2.800l3 0.350l-2.200 2.100l0.600 3l-2.700-1.500l-2.700 1.500l0.600-3l-2.200-2.100l3-0.350z" fill="#555"/><path d="M0.200 3.400l1.600 0.600" stroke="#555" stroke-width="0.700"/></svg>
<div class="abs" style="left:27px;top:262.3px;width:126px;height:73px;background:#fff;border:1px solid #cdcdcd"></div>
<svg class="abs" style="left:29px;top:264.3px;overflow:hidden" width="122" height="68.6" viewBox="0 0 122 68.6"><rect width="122" height="69" fill="#595959"/><rect x="0.0" y="3.8" width="16.3" height="8.3" fill="#4a4a4a" /><rect x="10.0" y="0.0" width="14.6" height="8.3" fill="#1679b0" /><rect x="16.3" y="4.8" width="24.9" height="5.9" fill="rgba(125,125,125,0.680)" /><rect x="18.6" y="6.2" width="10.1" height="1.8" fill="#fff" opacity="0.6"/><g fill="#6e6e6e"><circle cx="98.800" cy="14.500" r="9"/><circle cx="109.500" cy="19.200" r="6.200"/><circle cx="88.500" cy="20" r="6.500"/><rect x="84" y="18" width="31" height="9.500" rx="3"/></g><path d="M84 28.600q-6-0.500-5.500-7q0.500-5.500 6.500-6q2-12 13.500-12q10 0.500 11.500 9.500q8.500 1 8.500 8.500q0 6.500-5.500 7z" fill="none" stroke="#7c7c7c" stroke-width="0.500"/><rect x="0.8" y="17.0" width="31.5" height="3.8" fill="#fff" opacity="0.92"/><path d="M2.600 25.8h26" stroke="#ddd" stroke-width="0.600" stroke-dasharray="1 0.900"/><circle cx="31.100" cy="25.4" r="1.900" fill="#e6cf1f"/><rect x="0.8" y="28.3" width="31.5" height="3.8" fill="#fff" opacity="0.92"/><path d="M2.600 37.1h26" stroke="#ddd" stroke-width="0.600" stroke-dasharray="1 0.900"/><circle cx="31.100" cy="36.7" r="1.900" fill="#e6cf1f"/><rect x="0.8" y="39.6" width="31.5" height="3.8" fill="#fff" opacity="0.92"/><path d="M2.600 48.4h26" stroke="#ddd" stroke-width="0.600" stroke-dasharray="1 0.900"/><circle cx="31.100" cy="48.0" r="1.900" fill="#e6cf1f"/><path d="M33 59.600q-3-8 4-9.500q2-10 12-9q4-5 11-4q8 1.500 9 10q3 0.500 4.500 3" fill="none" stroke="#747474" stroke-width="0.500"/><path d="M38.800 59V56.500Q39 49.500 45.400 48.800Q48.500 48.600 50.800 50Q52.500 41.200 59.600 41.200Q67.200 41.400 68 50V59z" fill="#d4d4d4" opacity="0.950"/><path d="M79.800 61.400L81.500 52Q82.500 43.600 90.500 43.600Q97 43.800 98 50.500Q100 49.400 102.400 49.600Q107.700 50.400 107.700 56V61.400z" fill="#d9d9d9" opacity="0.950"/><path d="M53.700 63.200Q56 57.500 62 56.800Q65.500 57 67.200 54.600Q68.400 47.100 74 47.100Q80.500 47.300 80.600 54L79 63.200z" fill="#f3f3f3" opacity="0.970"/><path d="M31 12.600L84 23.500" stroke="#fff" stroke-width="1.100" opacity="0.900"/><path d="M63 23.400h24l-2 5.400h-19z" fill="#fff"/><path d="M82 22.800L108 24.600L108 26.800L82 26z" fill="#fff"/><circle cx="108.300" cy="25.800" r="2.600" fill="#fff"/><path d="M96.500 24.600l1.400 0.100l-0.600 1.800l-1.400-0.100zM100.600 24.900l1.400 0.100l-0.600 1.800l-1.400-0.100z" fill="#1f7fbf"/><ellipse cx="108" cy="22.500" rx="13" ry="0.600" fill="#fff" transform="rotate(4 108 22.500)"/><path d="M64.500 26.500q-7 2-9.500 10M69 27.500q-6 2.500-8.200 9M81.500 27.500q6 3 8.500 10.700M86 26q6 4 8 14" fill="none" stroke="#fff" stroke-width="1.400"/><circle cx="74.500" cy="35.900" r="3.900" fill="#dcdcdc"/><circle cx="74.500" cy="36.200" r="1.500" fill="#2a8fd0"/><rect x="72" y="29" width="5" height="3.400" fill="#e6e6e6"/><rect x="40.9" y="1.7" width="40.7" height="24.4" fill="#00b050" stroke="#dff3e6" stroke-width="0.500"/><rect x="44.2" y="4.4" width="34" height="1.700" fill="#fff" opacity="0.720"/><rect x="43.2" y="8.9" width="36" height="1.700" fill="#fff" opacity="0.720"/><rect x="46.2" y="13.1" width="30" height="1.700" fill="#fff" opacity="0.720"/><rect x="48.2" y="17.3" width="26" height="1.700" fill="#fff" opacity="0.720"/><rect x="53.8" y="21.4" width="15" height="1.700" fill="#fff" opacity="0.720"/><rect x="114.3" y="53.7" width="7.7" height="15.3" fill="#484848" /><rect x="111.3" y="47.7" width="7.5" height="11.3" fill="#dfc81f" /><rect x="114.8" y="37.6" width="4.8" height="15.5" fill="rgba(128,128,128,0.700)" /></svg>
<div class="t" style="left:4.0px;top:258.4px;height:19px;line-height:19px;font-size:14.6px;color:#444;width:17.300px;text-align:right;">2</div>
<svg class="abs" style="left:11px;top:279.6px;" width="10" height="9" viewBox="0 0 10 9"><path d="M5.900 0.200l1.300 2.800l3 0.350l-2.200 2.100l0.600 3l-2.700-1.500l-2.700 1.500l0.600-3l-2.200-2.100l3-0.350z" fill="#555"/><path d="M0.200 3.400l1.600 0.600" stroke="#555" stroke-width="0.700"/></svg>
<div class="abs" style="left:27px;top:353.3px;width:126px;height:73px;background:#fff;border:1px solid #cdcdcd"></div>
<svg class="abs" style="left:29px;top:355.3px;overflow:hidden" width="122" height="68.6" viewBox="0 0 122 68.6"><rect width="122" height="69" fill="#595959"/><rect x="0.0" y="3.8" width="16.9" height="8.3" fill="#4a4a4a" /><rect x="9.7" y="0.0" width="14.9" height="8.6" fill="#7e7e7e" /><rect x="16.9" y="5.0" width="13.1" height="5.7" fill="rgba(125,125,125,0.500)" /><circle cx="79.800" cy="18.600" r="23.200" fill="#8c8c8c"/><circle cx="79.800" cy="18.600" r="24.300" fill="none" stroke="#f0f0f0" stroke-width="0.500" opacity="0.850"/><ellipse cx="73.200" cy="5.200" rx="6.600" ry="0.450" fill="#fff"/><ellipse cx="99.100" cy="5.200" rx="8.600" ry="0.450" fill="#fff"/><path d="M66.700 7.100h33.300" stroke="#fff" stroke-width="0.900"/><circle cx="72.500" cy="7.100" r="1.100" fill="#fff"/><circle cx="99" cy="7.100" r="1.100" fill="#fff"/><path d="M73 6q5.300-1.400 10.800 0l-1.200 3h-8.400z" fill="#fff"/><rect x="75" y="5.600" width="6.600" height="3.300" rx="0.700" fill="#1f7fbf"/><path d="M74 9q-5.500 2-6 7.300M76.500 9.600q-3.500 2.400-3.800 6.700M80.200 9.600q3.500 2.400 3.800 6.700M82.700 9q5.500 2 6 7.300" fill="none" stroke="#fff" stroke-width="0.900"/><circle cx="78.600" cy="15.600" r="1.600" fill="#e6e6e6"/><circle cx="78.600" cy="15.700" r="0.900" fill="#2a8fd0"/><rect x="0.8" y="16.4" width="24.4" height="3.8" fill="#fff" opacity="0.88"/><rect x="0.8" y="23.9" width="24.4" height="3.8" fill="#fff" opacity="0.88"/><rect x="0.8" y="31.4" width="31.5" height="3.8" fill="#fff" opacity="0.88"/><path d="M40 44.200V30l1.800-2.200h29.100v-5.600h4.100v5.600h5.400l1.800 2.200v14.200z" fill="#2f3b50" stroke="#c8c8c8" stroke-width="0.400" stroke-opacity="0.600"/><rect x="44.2" y="31.1" width="31.4" height="2.2" fill="#fff" opacity="0.85"/><rect x="44.2" y="34.0" width="31.4" height="2" fill="#fff" opacity="0.8"/><rect x="17.1" y="53.7" width="7.5" height="8.9" fill="#8a8a8a" /><rect x="94.7" y="53.7" width="7.1" height="8.9" fill="#8a8a8a" /><rect x="59.0" y="53.7" width="9.0" height="8.9" fill="#8a8a8a" /><rect x="17.1" y="53.7" width="84.7" height="8.9" fill="none" stroke="#e8e8e8" stroke-width="0.500" opacity="0.800"/><path d="M26.400 43h22.500v-3.300h4.200v3.300h3.600l4.100 9.500h-2.400v13.100h-33.500v-13.100h-2.700z" fill="#d9742c"/><path d="M23 52.500l3-10.300M60 52.500l3 0" stroke="#e8e8e8" stroke-width="0.400" opacity="0.600"/><rect x="28.7" y="48.9" width="11.9" height="1.2" fill="#fff" opacity="0.7"/><rect x="28.7" y="52.4" width="23.8" height="2.4" fill="#fff" opacity="0.9"/><rect x="28.7" y="55.6" width="21.3" height="2.4" fill="#fff" opacity="0.9"/><rect x="28.7" y="58.1" width="1.3" height="3" fill="#fff" opacity="0.8"/><circle cx="34.900" cy="42.400" r="3.300" fill="#fff"/><circle cx="34.900" cy="42.400" r="1" fill="#d9c23a"/><path d="M67.300 47.700l7.200-9.500l5.300 4.200l8.300-4.200l7.700 8.400l-1.800 14.200h-26z" fill="#d93b35"/><rect x="70.3" y="43.5" width="7.7" height="1.1" fill="#fff" opacity="0.7"/><rect x="70.3" y="45.6" width="21.4" height="2.4" fill="#fff" opacity="0.9"/><rect x="70.3" y="48.8" width="22.7" height="2.4" fill="#fff" opacity="0.9"/><rect x="70.3" y="51.8" width="2.7" height="2" fill="#fff" opacity="0.8"/><circle cx="95.200" cy="45.100" r="3.300" fill="#fff"/><circle cx="95.200" cy="45.100" r="1" fill="#5a8fd0"/><rect x="24.9" y="4.0" width="40.4" height="24.1" fill="#00b050" stroke="#dff3e6" stroke-width="0.500"/><rect x="30.1" y="6.4" width="30" height="1.700" fill="#fff" opacity="0.720"/><rect x="27.1" y="11.0" width="36" height="1.700" fill="#fff" opacity="0.720"/><rect x="30.1" y="15.0" width="30" height="1.700" fill="#fff" opacity="0.720"/><rect x="32.1" y="19.0" width="26" height="1.700" fill="#fff" opacity="0.720"/><rect x="38.1" y="23.6" width="14" height="1.700" fill="#fff" opacity="0.720"/><rect x="114.3" y="53.7" width="7.7" height="15.3" fill="#484848" /><rect x="114.8" y="37.6" width="4.8" height="20.8" fill="rgba(128,128,128,0.550)" /><rect x="111.3" y="47.7" width="7.7" height="10.7" fill="rgba(128,128,128,0.550)" /></svg>
<div class="t" style="left:4.0px;top:349.4px;height:19px;line-height:19px;font-size:14.6px;color:#444;width:17.300px;text-align:right;">3</div>
<svg class="abs" style="left:11px;top:370.6px;" width="10" height="9" viewBox="0 0 10 9"><path d="M5.900 0.200l1.300 2.800l3 0.350l-2.200 2.100l0.600 3l-2.700-1.500l-2.700 1.500l0.600-3l-2.200-2.100l3-0.350z" fill="#555"/><path d="M0.200 3.400l1.600 0.600" stroke="#555" stroke-width="0.700"/></svg>
<div class="abs" style="left:25px;top:442.2px;width:130px;height:77px;background:#c43e1c;"></div>
<div class="abs" style="left:27px;top:444.2px;width:126px;height:73px;background:#fff;"></div>
<svg class="abs" style="left:29px;top:446.2px;overflow:hidden" width="122" height="68.6" viewBox="0 0 122 68.6"><rect width="122" height="69" fill="#595959"/><rect x="0.0" y="3.7" width="16.7" height="8.1" fill="#494949" /><rect x="10.8" y="0.0" width="13.6" height="8.0" fill="#44acdd" /><rect x="17.7" y="4.3" width="12.8" height="6.0" fill="rgba(125,125,125,0.68)" /><rect x="32.0" y="19.2" width="30.3" height="45.6" fill="#919191" /><rect x="76.5" y="7.2" width="30.3" height="40.0" fill="#919191" /><rect x="49.5" y="62.4" width="5.9" height="3.7" fill="rgba(69,69,69,0.75)" /><rect x="58.3" y="62.4" width="5.8" height="3.7" fill="rgba(69,69,69,0.75)" /><rect x="90.1" y="44.8" width="7.2" height="3.9" fill="rgba(58,58,58,0.420)" /><rect x="101.8" y="44.8" width="7.0" height="3.9" fill="rgba(58,58,58,0.420)" /><path d="M59 55h5.600v-2l4.200 4.100l-4.200 4.100v-2.100h-5.600z" fill="rgba(58,58,58,0.420)"/><path d="M78.600 39.300h-5.500v-2.100l-4.100 4.100l4.100 4.200v-2.100h5.500z" fill="rgba(58,58,58,0.420)"/><rect x="115.5" y="54.5" width="6.5" height="14.5" fill="#484848" /><rect x="111.8" y="47.4" width="7.2" height="11.8" fill="#dfc81f" /><rect x="115.8" y="38.6" width="5.1" height="14.7" fill="rgba(128,128,128,0.7)" /><use href="#dr1" transform="scale(0.14353)"/><use href="#dr2" transform="scale(0.14353)"/><rect x="24.8" y="3.7" width="39.9" height="24.1" fill="#00b050" stroke="#dff3e6" stroke-width="0.500"/><rect x="30.8" y="10.8" width="28" height="1.700" fill="#fff" opacity="0.720"/><rect x="31.2" y="14.9" width="27" height="1.700" fill="#fff" opacity="0.720"/><rect x="32.2" y="19.0" width="25" height="1.700" fill="#fff" opacity="0.720"/><rect x="1.6" y="13.7" width="16.4" height="2.2" fill="#fff" opacity="0.9"/><rect x="1.6" y="16.2" width="16.4" height="2.2" fill="#fff" opacity="0.9"/><rect x="1.6" y="18.7" width="15.4" height="2.2" fill="#fff" opacity="0.8"/><rect x="1.6" y="21.1" width="4.9" height="1.8" fill="#fff" opacity="0.7"/><rect x="1.6" y="29.2" width="16.4" height="2.2" fill="#fff" opacity="0.9"/><rect x="1.6" y="31.7" width="16.4" height="2.2" fill="#fff" opacity="0.9"/><rect x="1.6" y="34.2" width="15.4" height="2.2" fill="#fff" opacity="0.8"/><rect x="1.6" y="36.6" width="4.9" height="1.8" fill="#fff" opacity="0.7"/><rect x="1.6" y="45.0" width="16.4" height="2.2" fill="#fff" opacity="0.9"/><rect x="1.6" y="47.5" width="16.4" height="2.2" fill="#fff" opacity="0.9"/><rect x="1.6" y="50.0" width="15.4" height="2.2" fill="#fff" opacity="0.8"/><rect x="1.6" y="52.4" width="4.9" height="1.8" fill="#fff" opacity="0.7"/><rect x="35.3" y="54.5" width="16.7" height="3" fill="#fff" opacity="0.9"/><rect x="35.3" y="58.0" width="8.7" height="1.6" fill="#fff" opacity="0.6"/><rect x="78.7" y="37.1" width="23.3" height="2.8" fill="#fff" opacity="0.9"/><rect x="78.7" y="40.5" width="7.3" height="1.6" fill="#fff" opacity="0.6"/><rect x="76.5" y="50.8" width="28.5" height="2.8" fill="#fff" opacity="0.9"/><rect x="87.0" y="4.5" width="18.8" height="1.4" fill="#fff" opacity="0.7"/></svg>
<div class="t" style="left:4.0px;top:440.3px;height:19px;line-height:19px;font-size:14.6px;color:#c43e1c;width:17.300px;text-align:right;">4</div>
<svg class="abs" style="left:11px;top:461.5px;" width="10" height="9" viewBox="0 0 10 9"><path d="M5.900 0.200l1.300 2.800l3 0.350l-2.200 2.100l0.600 3l-2.700-1.500l-2.700 1.500l0.600-3l-2.200-2.100l3-0.350z" fill="#555"/><path d="M0.200 3.400l1.600 0.600" stroke="#555" stroke-width="0.700"/></svg>
<div class="abs" style="left:27px;top:535.2px;width:126px;height:73px;background:#fff;border:1px solid #cdcdcd"></div>
<svg class="abs" style="left:29px;top:537.2px;overflow:hidden" width="122" height="68.6" viewBox="0 0 122 68.6"><rect width="122" height="69" fill="#595959"/><rect x="0.0" y="3.7" width="16.7" height="8.1" fill="#494949" /><rect x="10.8" y="0.0" width="13.6" height="8.0" fill="#44acdd" /><rect x="17.7" y="4.3" width="12.8" height="6.0" fill="rgba(125,125,125,0.68)" /><rect x="53.0" y="4.7" width="53.5" height="1.4" fill="#fff" opacity="0.8"/><rect x="1.2" y="18.0" width="21.8" height="2.6" fill="#fff" opacity="0.9"/><path d="M22.200 25.400v36.300" stroke="#fff" stroke-width="1"/><circle cx="12" cy="27.500" r="2.600" fill="#e0e0e0"/><circle cx="12" cy="27.500" r="1.300" fill="#1f7fbf"/><path d="M7 31.500h10" stroke="#fff" stroke-width="0.600"/><path d="M29 30l4 2l4-2M31 33.500h5" stroke="#eee" stroke-width="0.700" fill="none"/><rect x="1.2" y="36.6" width="19.3" height="5.4" fill="#fff" opacity="0.9"/><rect x="23.0" y="36.6" width="19.3" height="5.4" fill="#fff" opacity="0.9"/><rect x="1.2" y="49.8" width="19.3" height="5.4" fill="#fff" opacity="0.9"/><rect x="23.0" y="49.8" width="19.3" height="5.4" fill="#fff" opacity="0.9"/><path d="M46 19.3h64" stroke="#e2e2e2" stroke-width="0.65" opacity="0.850"/><path d="M46 23.8h64" stroke="#e2e2e2" stroke-width="0.65" opacity="0.850"/><path d="M46 28.2h64" stroke="#e2e2e2" stroke-width="0.65" opacity="0.850"/><path d="M46 32.7h64" stroke="#e2e2e2" stroke-width="0.65" opacity="0.850"/><path d="M46 37.1h64" stroke="#e2e2e2" stroke-width="0.65" opacity="0.850"/><path d="M46 41.5h64" stroke="#e2e2e2" stroke-width="0.65" opacity="0.850"/><path d="M46 46.0h64" stroke="#e2e2e2" stroke-width="0.65" opacity="0.850"/><path d="M46 50.5h64" stroke="#e2e2e2" stroke-width="0.65" opacity="0.850"/><path d="M46 54.9h64" stroke="#e2e2e2" stroke-width="0.65" opacity="0.850"/><path d="M46 59.4h64" stroke="#e2e2e2" stroke-width="0.9" opacity="0.850"/><rect x="52.5" y="31.4" width="3.9" height="27.9" fill="#ffe512" /><rect x="57.3" y="27.8" width="3.9" height="31.5" fill="#0a7cc6" /><rect x="67.7" y="21.8" width="3.9" height="37.5" fill="#ffe512" /><rect x="72.5" y="25.4" width="3.9" height="33.9" fill="#0a7cc6" /><rect x="83.0" y="38.2" width="3.9" height="21.1" fill="#ffe512" /><rect x="87.8" y="18.1" width="3.9" height="41.2" fill="#0a7cc6" /><rect x="98.4" y="28.5" width="3.9" height="30.8" fill="#ffe512" /><rect x="103.3" y="18.1" width="3.9" height="41.2" fill="#0a7cc6" /><rect x="25.4" y="4.4" width="39.9" height="23.9" fill="#00b050" stroke="#dff3e6" stroke-width="0.500"/><rect x="31.3" y="10.8" width="28" height="1.700" fill="#fff" opacity="0.720"/><rect x="31.8" y="14.9" width="27" height="1.700" fill="#fff" opacity="0.720"/><rect x="32.8" y="19.0" width="25" height="1.700" fill="#fff" opacity="0.720"/><rect x="115.0" y="59.3" width="7.0" height="9.7" fill="#484848" /><rect x="112.0" y="47.9" width="7.0" height="11.4" fill="#dfc81f" /><rect x="115.4" y="38.2" width="4.3" height="15.0" fill="rgba(150,150,150,0.550)" /></svg>
<div class="t" style="left:4.0px;top:531.3px;height:19px;line-height:19px;font-size:14.6px;color:#444;width:17.300px;text-align:right;">5</div>
<svg class="abs" style="left:11px;top:552.5px;" width="10" height="9" viewBox="0 0 10 9"><path d="M5.900 0.200l1.300 2.800l3 0.350l-2.200 2.100l0.600 3l-2.700-1.500l-2.700 1.500l0.600-3l-2.200-2.100l3-0.350z" fill="#555"/><path d="M0.200 3.400l1.600 0.600" stroke="#555" stroke-width="0.700"/></svg>
<div class="abs" style="left:27px;top:626px;width:126px;height:73px;background:#fff;border:1px solid #cdcdcd"></div>
<svg class="abs" style="left:29px;top:628px;overflow:hidden" width="122" height="68.6" viewBox="0 0 122 68.6"><rect width="122" height="69" fill="#595959"/><rect x="0.0" y="3.7" width="16.7" height="8.1" fill="#494949" /><rect x="10.8" y="0.0" width="13.6" height="8.0" fill="#44acdd" /><rect x="17.7" y="4.3" width="12.8" height="6.0" fill="rgba(125,125,125,0.68)" /><path d="M14.500 24.200h92" stroke="#fff" stroke-width="0.800"/><path d="M20 26h82v2.200h-82z" fill="#fff" opacity="0.900"/><path d="M51 27.400h20l1.500 3.400h-23z" fill="#fff"/><path d="M52 30l-5 6M57 30.500l-2.500 5.500M65 30.500l2.500 5.500M70 30l5 6" stroke="#fff" stroke-width="2" fill="none"/><rect x="54.400" y="29" width="9.700" height="2" fill="#0a7cc6"/><rect x="79" y="27.600" width="7" height="1.600" fill="#0a7cc6" opacity="0.800"/><rect x="69.0" y="14.0" width="20.5" height="5.3" fill="#111" stroke="#fff" stroke-width="0.600"/><circle cx="91.900" cy="16.900" r="2.400" fill="#ecd84a"/><rect x="71.0" y="15.9" width="15.0" height="1.6" fill="#fff" opacity="0.8"/><rect x="72.0" y="21.8" width="21.0" height="3.2" fill="none" stroke="#fff" stroke-width="0.500"/><rect x="25.4" y="4.4" width="39.9" height="23.9" fill="#00b050" stroke="#dff3e6" stroke-width="0.500"/><rect x="33.3" y="7.2" width="24" height="1.700" fill="#fff" opacity="0.720"/><rect x="30.3" y="10.8" width="30" height="1.700" fill="#fff" opacity="0.720"/><rect x="32.3" y="14.4" width="26" height="1.700" fill="#fff" opacity="0.720"/><rect x="30.3" y="18.0" width="30" height="1.700" fill="#fff" opacity="0.720"/><rect x="37.3" y="21.6" width="16" height="1.700" fill="#fff" opacity="0.720"/></svg>
<div class="t" style="left:4.0px;top:622.1px;height:19px;line-height:19px;font-size:14.6px;color:#444;width:17.300px;text-align:right;">6</div>
<svg class="abs" style="left:11px;top:643.3px;" width="10" height="9" viewBox="0 0 10 9"><path d="M5.900 0.200l1.300 2.800l3 0.350l-2.200 2.100l0.600 3l-2.700-1.500l-2.700 1.500l0.600-3l-2.200-2.100l3-0.350z" fill="#555"/><path d="M0.200 3.400l1.600 0.600" stroke="#555" stroke-width="0.700"/></svg>
</div></div>
<div class="abs" style="left:174px;top:155px;width:15px;height:507px;background:#dcdcdc;"></div>
<div class="abs" style="left:174px;top:155px;width:15px;height:15px;background:#fff;border:1px solid #ababab"></div>
<svg class="abs" style="left:178px;top:160px;" width="7" height="4" viewBox="0 0 7 4"><path d="M0 4h7l-3.500-4z" fill="#606060"/></svg>
<div class="abs" style="left:174px;top:170px;width:15px;height:153px;background:#fff;border:1px solid #ababab"></div>
<div class="abs" style="left:174px;top:646px;width:15px;height:15px;background:#fff;border:1px solid #ababab"></div>
<svg class="abs" style="left:178px;top:652px;" width="7" height="4" viewBox="0 0 7 4"><path d="M0 0h7l-3.500 4z" fill="#606060"/></svg>
<div class="abs" style="left:193px;top:155px;width:1px;height:508px;background:#c6c6c6;"></div>
<!-- part_slide -->
<div id="slide" class="abs" style="left:208px;top:166px;width:850px;height:478px;background:#595959;box-shadow:1px 1px 1px rgba(0,0,0,0.12)">
<div class="abs" style="left:0px;top:26px;width:116px;height:56.5px;background:#494949;"></div>
<div class="abs" style="left:75px;top:0px;width:95px;height:56.69999999999999px;background:#44acdd;"></div>
<div class="abs" style="left:123px;top:30px;width:89px;height:42px;background:rgba(125,125,125,0.68);"></div>
<div class="t" style="left:133.8px;top:35.1px;height:31px;line-height:31px;font-size:23.6px;color:#fff;letter-spacing:-0.20px;">Slide</div>
<div class="abs" style="left:223px;top:134px;width:211px;height:318px;background:#919191;"></div>
<div class="abs" style="left:533px;top:50px;width:211px;height:279px;background:#919191;"></div>
<div class="abs" style="left:549px;top:39px;width:45px;height:21px;background:rgba(58,58,58,0.42);"></div>
<div class="abs" style="left:345px;top:435px;width:41px;height:26px;background:rgba(69,69,69,0.75);"></div>
<div class="abs" style="left:406px;top:435px;width:41px;height:26px;background:rgba(69,69,69,0.75);"></div>
<div class="abs" style="left:628px;top:312px;width:50px;height:27px;background:rgba(58,58,58,0.42);"></div>
<div class="abs" style="left:709px;top:312px;width:49px;height:27px;background:rgba(58,58,58,0.42);"></div>
<svg class="abs" style="left:411px;top:369px;" width="68" height="57" viewBox="0 0 68 57"><path d="M0 13h39v-13l29 28.500l-29 28.500v-15h-39z" fill="rgba(58,58,58,0.42)"/></svg>
<svg class="abs" style="left:481px;top:259px;" width="67" height="58" viewBox="0 0 67 58"><path d="M67 15h-38.500v-15l-28.500 29l28.500 29v-14.500h38.500z" fill="rgba(58,58,58,0.42)"/></svg>
<div class="abs" style="left:800px;top:377px;width:50px;height:101px;background:#484848;"></div>
<div class="abs" style="left:777px;top:330px;width:50px;height:82px;background:rgba(226,203,30,0.97);"></div>
<div class="abs" style="left:804px;top:269px;width:36px;height:102px;background:rgba(128,128,128,0.7);"></div>
<svg class="abs" style="left:0;top:0" width="850" height="478" viewBox="0 0 850 478"><g id="dr1" transform="translate(92 174) scale(0.39270)"><ellipse cx="135.0" cy="292.0" rx="99.9" ry="6" transform="rotate(-13.90 135.0 292.0)" fill="none" stroke="#c8c8c8" stroke-width="1.6" opacity="0.55"/><ellipse cx="302.0" cy="241.0" rx="74.3" ry="6" transform="rotate(-19.65 302.0 241.0)" fill="none" stroke="#c8c8c8" stroke-width="1.6" opacity="0.55"/><ellipse cx="222" cy="300" rx="22" ry="19" fill="none" stroke="#c8c8c8" stroke-width="1.6" opacity="0.5"/><ellipse cx="206" cy="308" rx="22" ry="19" fill="none" stroke="#c8c8c8" stroke-width="1.6" opacity="0.5"/><ellipse cx="813.0" cy="90.0" rx="73.2" ry="6" transform="rotate(-14.23 813.0 90.0)" fill="none" stroke="#c8c8c8" stroke-width="1.6" opacity="0.55"/><ellipse cx="975.0" cy="41.0" rx="95.5" ry="6" transform="rotate(-17.68 975.0 41.0)" fill="none" stroke="#c8c8c8" stroke-width="1.6" opacity="0.55"/><ellipse cx="906" cy="104" rx="22" ry="19" fill="none" stroke="#c8c8c8" stroke-width="1.6" opacity="0.5"/><ellipse cx="922" cy="110" rx="22" ry="19" fill="none" stroke="#c8c8c8" stroke-width="1.6" opacity="0.5"/><path d="M468 278 L502 283 L458 340 L468 402 L452 412 L436 340z" fill="#d9d9d9" /><path d="M656 240 L672 214 L704 214 L760 272 L777 320 L764 326 L738 280 L690 253z" fill="#d9d9d9" /><path d="M420 270L388 372L398 440L412 436" fill="none" stroke="#c8c8c8" stroke-width="1.6" opacity="0.6"/><path d="M732 190L808 258L830 312L814 318" fill="none" stroke="#c8c8c8" stroke-width="1.600" opacity="0.600"/><path d="M498 272 L642 236 L634 262 L604 284 L552 296 L512 288z" fill="#d4d4d4" /><path d="M548 290 L610 282 L614 294 L554 302z" fill="#555" /><path d="M566 300 L604 296 L606 312 L570 314z" fill="#e6e6e6" /><circle cx="606" cy="346" r="49" fill="none" stroke="#d0d0d0" stroke-width="1.5" opacity="0.6"/><circle cx="606" cy="346" r="43" fill="#e6e6e6"/><circle cx="606" cy="346" r="31" fill="#b9b9b9"/><circle cx="605" cy="348" r="22" fill="#9a9a9a"/><circle cx="605" cy="348" r="15" fill="#0a7cc6"/><circle cx="606" cy="350" r="8.5" fill="#6fd0f6"/><path d="M440 262 L477 272 L420 374 L423 426 L409 431 L397 373z" fill="#fff" /><path d="M694 188 L726 186 L794 254 L813 310 L799 316 L775 268 L700 210z" fill="#fff" /><path d="M250 290 L436 237 L500 204 L560 182 L616 170 L700 154 L872 106 L884 128 L704 187 L662 214 L642 240 L560 266 L500 276 L432 266 L262 306z" fill="#fff" /><path d="M507 206Q555 186 602 178Q616 180 619 192L626 226Q585 244 540 254Q522 252 516 240z" fill="#0a7cc6"/><path d="M297 276 L317 271 L326 290 L306 296z" fill="#0a7cc6" /><path d="M340 263 L362 257 L373 276 L351 283z" fill="#0a7cc6" /><path d="M766 140 L783 135 L779 160 L764 164z" fill="#0a7cc6" /><path d="M813 125 L831 119 L826 145 L810 149z" fill="#0a7cc6" /><path d="M468.0 241.0l-3 15" stroke="#222" stroke-width="3.800"/><path d="M475.4 238.9l-3 15" stroke="#222" stroke-width="3.800"/><path d="M482.8 236.8l-3 15" stroke="#222" stroke-width="3.800"/><path d="M490.2 234.7l-3 15" stroke="#222" stroke-width="3.800"/><path d="M497.6 232.6l-3 15" stroke="#222" stroke-width="3.800"/><path d="M641.0 193.0l-3 15" stroke="#222" stroke-width="3.800"/><path d="M648.2 190.9l-3 15" stroke="#222" stroke-width="3.800"/><path d="M655.4 188.8l-3 15" stroke="#222" stroke-width="3.800"/><path d="M662.6 186.7l-3 15" stroke="#222" stroke-width="3.800"/><path d="M669.8 184.6l-3 15" stroke="#222" stroke-width="3.800"/><ellipse cx="242" cy="305" rx="25.65" ry="19.439999999999998" fill="#fff"/><circle cx="221.8" cy="309.1" r="11.3" fill="#fff"/><circle cx="260.9" cy="310.4" r="12.2" fill="#fff"/><circle cx="236.6" cy="318.5" r="13.0" fill="#fff"/><circle cx="242.0" cy="292.9" r="13.5" fill="#fff"/><circle cx="251.4" cy="318.5" r="11.3" fill="#fff"/><ellipse cx="888" cy="115" rx="25.65" ry="19.439999999999998" fill="#fff"/><circle cx="867.8" cy="119.0" r="11.3" fill="#fff"/><circle cx="906.9" cy="120.4" r="12.2" fill="#fff"/><circle cx="882.6" cy="128.5" r="13.0" fill="#fff"/><circle cx="888.0" cy="102.8" r="13.5" fill="#fff"/><circle cx="897.5" cy="128.5" r="11.3" fill="#fff"/><path d="M232 266l6 22" stroke="#fff" stroke-width="7" stroke-linecap="round"/><path d="M876 78l6 22" stroke="#fff" stroke-width="7" stroke-linecap="round"/><ellipse cx="159.0" cy="291.5" rx="76.0" ry="4.3" transform="rotate(-13.31 159.0 291.5)" fill="#fff" opacity="1"/><ellipse cx="307.0" cy="247.0" rx="77.8" ry="4.3" transform="rotate(-17.97 307.0 247.0)" fill="#fff" opacity="1"/><ellipse cx="801.5" cy="101.0" rx="77.1" ry="4.3" transform="rotate(-15.03 801.5 101.0)" fill="#fff" opacity="1"/><ellipse cx="948.5" cy="57.0" rx="75.8" ry="4.3" transform="rotate(-16.88 948.5 57.0)" fill="#fff" opacity="1"/></g><g id="dr2" transform="translate(452 24) scale(0.37443)"><ellipse cx="125.0" cy="101.0" rx="95.6" ry="6" transform="rotate(21.47 125.0 101.0)" fill="none" stroke="#c8c8c8" stroke-width="1.6" opacity="0.55"/><ellipse cx="293.0" cy="167.0" rx="84.2" ry="6" transform="rotate(20.16 293.0 167.0)" fill="none" stroke="#c8c8c8" stroke-width="1.6" opacity="0.55"/><ellipse cx="186" cy="180" rx="22" ry="19" fill="none" stroke="#c8c8c8" stroke-width="1.6" opacity="0.5"/><ellipse cx="170" cy="186" rx="22" ry="19" fill="none" stroke="#c8c8c8" stroke-width="1.6" opacity="0.5"/><ellipse cx="821.0" cy="362.0" rx="84.5" ry="6" transform="rotate(20.79 821.0 362.0)" fill="none" stroke="#c8c8c8" stroke-width="1.6" opacity="0.55"/><ellipse cx="993.0" cy="430.0" rx="99.7" ry="6" transform="rotate(21.16 993.0 430.0)" fill="none" stroke="#c8c8c8" stroke-width="1.6" opacity="0.55"/><ellipse cx="890" cy="436" rx="22" ry="19" fill="none" stroke="#c8c8c8" stroke-width="1.6" opacity="0.5"/><ellipse cx="906" cy="444" rx="22" ry="19" fill="none" stroke="#c8c8c8" stroke-width="1.6" opacity="0.5"/><path d="M440 308 L472 346 L376 372 L340 422 L322 412 L346 360z" fill="#d9d9d9" /><path d="M598 386 L640 378 L662 480 L650 532 L632 522 L640 470z" fill="#d9d9d9" /><path d="M392 280L286 334L254 402L272 408" fill="none" stroke="#c8c8c8" stroke-width="1.6" opacity="0.6"/><path d="M684 384L724 500L696 572L676 560" fill="none" stroke="#c8c8c8" stroke-width="1.6" opacity="0.6"/><path d="M428 308 L606 384 L566 404 L500 388 L458 356z" fill="#d4d4d4" /><path d="M472 378 L552 400 L548 412 L468 390z" fill="#555" /><path d="M486 394 L530 406 L526 420 L484 410z" fill="#e6e6e6" /><circle cx="490" cy="456" r="49" fill="none" stroke="#d0d0d0" stroke-width="1.5" opacity="0.6"/><circle cx="490" cy="456" r="43" fill="#e6e6e6"/><circle cx="490" cy="456" r="31" fill="#b9b9b9"/><circle cx="487" cy="456" r="22" fill="#9a9a9a"/><circle cx="487" cy="456" r="15" fill="#0a7cc6"/><circle cx="488" cy="458" r="8.5" fill="#6fd0f6"/><path d="M398 284 L442 300 L332 350 L290 406 L272 400 L300 340z" fill="#fff" /><path d="M640 374 L682 386 L716 500 L690 562 L672 552 L690 496z" fill="#fff" /><path d="M232 186 L420 260 L492 266 L560 290 L604 314 L662 349 L854 421 L844 444 L662 378 L604 388 L524 376 L470 350 L430 310 L398 280 L238 210z" fill="#fff" /><path d="M494 276Q550 290 600 316Q604 322 600 332L592 354Q584 364 570 362Q525 350 488 330Q476 318 480 304z" fill="#ffe512"/><path d="M270 200 L290 208 L292 233 L272 225z" fill="#c8a818" /><path d="M318 218 L338 226 L340 251 L320 243z" fill="#c8a818" /><path d="M752 382 L772 391 L756 411 L737 402z" fill="#c8a818" /><path d="M802 402 L822 410 L806 429 L788 420z" fill="#c8a818" /><path d="M436.0 282.0l-5 15" stroke="#222" stroke-width="3.800"/><path d="M443.4 285.1l-5 15" stroke="#222" stroke-width="3.800"/><path d="M450.8 288.2l-5 15" stroke="#222" stroke-width="3.800"/><path d="M458.2 291.3l-5 15" stroke="#222" stroke-width="3.800"/><path d="M465.6 294.4l-5 15" stroke="#222" stroke-width="3.800"/><path d="M612.0 349.0l-5 15" stroke="#222" stroke-width="3.800"/><path d="M619.4 352.1l-5 15" stroke="#222" stroke-width="3.800"/><path d="M626.8 355.2l-5 15" stroke="#222" stroke-width="3.800"/><path d="M634.2 358.3l-5 15" stroke="#222" stroke-width="3.800"/><path d="M641.6 361.4l-5 15" stroke="#222" stroke-width="3.800"/><ellipse cx="208" cy="190" rx="26.599999999999998" ry="20.16" fill="#fff"/><circle cx="187.0" cy="194.2" r="11.8" fill="#fff"/><circle cx="227.6" cy="195.6" r="12.6" fill="#fff"/><circle cx="202.4" cy="204.0" r="13.4" fill="#fff"/><circle cx="208.0" cy="177.4" r="14.0" fill="#fff"/><circle cx="217.8" cy="204.0" r="11.8" fill="#fff"/><ellipse cx="868" cy="440" rx="26.599999999999998" ry="20.16" fill="#fff"/><circle cx="847.0" cy="444.2" r="11.8" fill="#fff"/><circle cx="887.6" cy="445.6" r="12.6" fill="#fff"/><circle cx="862.4" cy="454.0" r="13.4" fill="#fff"/><circle cx="868.0" cy="427.4" r="14.0" fill="#fff"/><circle cx="877.8" cy="454.0" r="11.8" fill="#fff"/><path d="M226 154l-6 22" stroke="#fff" stroke-width="7" stroke-linecap="round"/><path d="M883 404l-6 22" stroke="#fff" stroke-width="7" stroke-linecap="round"/><ellipse cx="152.0" cy="123.5" rx="79.7" ry="4.5" transform="rotate(21.73 152.0 123.5)" fill="#fff" opacity="1"/><ellipse cx="303.0" cy="181.0" rx="81.6" ry="4.5" transform="rotate(19.32 303.0 181.0)" fill="#fff" opacity="1"/><ellipse cx="808.0" cy="373.0" rx="76.9" ry="3.8" transform="rotate(20.56 808.0 373.0)" fill="#fff" opacity="1"/><ellipse cx="960.0" cy="431.0" rx="78.1" ry="3.8" transform="rotate(18.67 960.0 431.0)" fill="#fff" opacity="1"/></g></svg>
<div class="abs" style="left:172px;top:26px;width:279px;height:168px;background:#00b050;border:1px solid #e8f6ee"></div>
<div class="t" style="left:206.9px;top:70.0px;height:25px;line-height:25px;font-size:19.6px;color:#fff;letter-spacing:0.54px;white-space:pre;-webkit-text-stroke:0.3px #fff;">*NOTE -  In slide show</div>
<div class="t" style="left:210.6px;top:98.1px;height:25px;line-height:25px;font-size:19.6px;color:#fff;letter-spacing:0.88px;-webkit-text-stroke:0.3px #fff;">mode, click mouse to</div>
<div class="t" style="left:217.6px;top:126.5px;height:25px;line-height:25px;font-size:19.6px;color:#fff;letter-spacing:0.97px;-webkit-text-stroke:0.3px #fff;">advance animation.</div>
<div class="t" style="left:607.8px;top:28.2px;height:18px;line-height:18px;font-size:13.5px;color:#fff;letter-spacing:0.24px;">COMPARISON TWO</div>
<div class="bt" style="left:11.7px;top:95.7px;height:16px;line-height:16px;font-size:13.2px;-webkit-text-stroke:0.45px #fff;transform:scaleX(0.6723)">The quick brown fox jumped</div>
<div class="bt" style="left:11.7px;top:110.1px;height:16px;line-height:16px;font-size:13.2px;-webkit-text-stroke:0.45px #fff;transform:scaleX(0.6805)">over the lazy dog. The quick</div>
<div class="bt" style="left:11.7px;top:124.5px;height:16px;line-height:16px;font-size:13.2px;-webkit-text-stroke:0.45px #fff;transform:scaleX(0.6907)">brown fox jumped over the</div>
<div class="bt" style="left:11.7px;top:138.9px;height:16px;line-height:16px;font-size:13.2px;-webkit-text-stroke:0.45px #fff;transform:scaleX(0.6640)">lazy dog.</div>
<div class="bt" style="left:11.7px;top:202.6px;height:16px;line-height:16px;font-size:13.2px;-webkit-text-stroke:0.45px #fff;transform:scaleX(0.6723)">The quick brown fox jumped</div>
<div class="bt" style="left:11.7px;top:217.0px;height:16px;line-height:16px;font-size:13.2px;-webkit-text-stroke:0.45px #fff;transform:scaleX(0.6805)">over the lazy dog. The quick</div>
<div class="bt" style="left:11.7px;top:231.4px;height:16px;line-height:16px;font-size:13.2px;-webkit-text-stroke:0.45px #fff;transform:scaleX(0.6907)">brown fox jumped over the</div>
<div class="bt" style="left:11.7px;top:245.8px;height:16px;line-height:16px;font-size:13.2px;-webkit-text-stroke:0.45px #fff;transform:scaleX(0.6640)">lazy dog.</div>
<div class="bt" style="left:11.7px;top:313.0px;height:16px;line-height:16px;font-size:13.2px;-webkit-text-stroke:0.45px #fff;transform:scaleX(0.6723)">The quick brown fox jumped</div>
<div class="bt" style="left:11.7px;top:327.4px;height:16px;line-height:16px;font-size:13.2px;-webkit-text-stroke:0.45px #fff;transform:scaleX(0.6805)">over the lazy dog. The quick</div>
<div class="bt" style="left:11.7px;top:341.8px;height:16px;line-height:16px;font-size:13.2px;-webkit-text-stroke:0.45px #fff;transform:scaleX(0.6907)">brown fox jumped over the</div>
<div class="bt" style="left:11.7px;top:356.2px;height:16px;line-height:16px;font-size:13.2px;-webkit-text-stroke:0.45px #fff;transform:scaleX(0.6640)">lazy dog.</div>
<div class="bt" style="left:246.0px;top:367.5px;height:16px;line-height:16px;font-size:13.2px;-webkit-text-stroke:0.45px #fff;transform:scaleX(0.6764)">The quick brown fox jumped over the lazy</div>
<div class="bt" style="left:246.0px;top:381.9px;height:16px;line-height:16px;font-size:13.2px;-webkit-text-stroke:0.45px #fff;transform:scaleX(0.6714)">dog. The quick brown fox jumped over</div>
<div class="bt" style="left:246.0px;top:396.3px;height:16px;line-height:16px;font-size:13.2px;-webkit-text-stroke:0.45px #fff;transform:scaleX(0.6692)">the lazy dog.</div>
<div class="bt" style="left:548.0px;top:249.0px;height:16px;line-height:16px;font-size:13.2px;-webkit-text-stroke:0.45px #fff;transform:scaleX(0.6764)">The quick brown fox jumped over the lazy</div>
<div class="bt" style="left:548.0px;top:263.4px;height:16px;line-height:16px;font-size:13.2px;-webkit-text-stroke:0.45px #fff;transform:scaleX(0.6714)">dog. The quick brown fox jumped over</div>
<div class="bt" style="left:548.0px;top:277.8px;height:16px;line-height:16px;font-size:13.2px;-webkit-text-stroke:0.45px #fff;transform:scaleX(0.6692)">the lazy dog.</div>
<div class="bt" style="left:533.3px;top:349.0px;height:16px;line-height:16px;font-size:13.2px;-webkit-text-stroke:0.45px #fff;transform:scaleX(0.6739)">The quick brown fox jumped over the lazy dog.</div>
<div class="bt" style="left:533.3px;top:362.9px;height:16px;line-height:16px;font-size:13.2px;-webkit-text-stroke:0.45px #fff;transform:scaleX(0.6739)">The quick brown fox jumped over the lazy dog.</div>
</div>
<!-- part_bottom -->
<div class="abs" style="left:1078px;top:155px;width:15px;height:435px;background:#dcdcdc;"></div>
<div class="abs" style="left:1078px;top:155px;width:15px;height:15px;background:#fff;border:1px solid #ababab"></div>
<svg class="abs" style="left:1082px;top:160px;" width="7" height="4" viewBox="0 0 7 4"><path d="M0 4h7l-3.500-4z" fill="#606060"/></svg>
<div class="abs" style="left:1078px;top:244px;width:15px;height:25px;background:#fff;border:1px solid #ababab"></div>
<div class="abs" style="left:1078px;top:589px;width:15px;height:15px;background:#fff;border:1px solid #ababab"></div>
<svg class="abs" style="left:1082px;top:595px;" width="7" height="4" viewBox="0 0 7 4"><path d="M0 0h7l-3.500 4z" fill="#606060"/></svg>
<svg class="abs" style="left:1081.5px;top:609px;" width="8" height="8" viewBox="0 0 8 8"><path d="M0 4h8l-4-4zM0 8h8l-4-4z" fill="#606060"/><path d="M0.500 4.200h7" stroke="#606060" stroke-width="0.800"/></svg>
<svg class="abs" style="left:1081.5px;top:627px;" width="8" height="8" viewBox="0 0 8 8"><path d="M0 0h8l-4 4zM0 4h8l-4 4z" fill="#606060"/><path d="M0.500 3.800h7" stroke="#606060" stroke-width="0.800"/></svg>
<div class="abs" style="left:194px;top:660px;width:900px;height:1px;background:#c4c4c4;"></div>
<div class="abs" style="left:194px;top:661px;width:900px;height:2px;background:#ebebeb;"></div>
<div class="abs" style="left:1px;top:663px;width:1093px;height:22px;background:#f1f1f1;"></div>
<div class="abs" style="left:1px;top:663px;width:1093px;height:1px;background:#c8c8c8;"></div>
<div class="t" style="left:8.0px;top:666.5px;height:15px;line-height:15px;font-size:11.5px;color:#444;letter-spacing:-0.07px;">Slide 4 of 17</div>
<svg class="abs" style="left:91px;top:667px;" width="16" height="14" viewBox="0 0 16 14"><path d="M1 1.400c2.400-0.800 4.400-0.600 6 0.600v9.600c-1.600-1.200-3.600-1.400-6-0.600z" fill="none" stroke="#555" stroke-width="1"/><path d="M7 2c1.200-0.900 2.600-1.200 4-1v4" fill="none" stroke="#555" stroke-width="1"/><path d="M7 11.600c1-0.700 2-1 3-1" fill="none" stroke="#555" stroke-width="1"/><path d="M14.400 3.400l1.300 1.300l-5 5.600l-2 0.700l0.600-2z" fill="#fff" stroke="#555" stroke-width="0.900"/><path d="M7 11.600v2" stroke="#555" stroke-width="1"/></svg>
<div class="t" style="left:122.0px;top:666.5px;height:15px;line-height:15px;font-size:11.5px;color:#444;letter-spacing:-0.07px;">English (United States)</div>
<svg class="abs" style="left:578px;top:668px;" width="12" height="12" viewBox="0 0 12 12"><path d="M0 6.500h11.500M0 9h11.500M0 11.500h11.500" stroke="#555" stroke-width="1"/><path d="M3 4.400h5.500l-2.750-3.400z" fill="#555"/></svg>
<div class="t" style="left:594.2px;top:666.5px;height:15px;line-height:15px;font-size:11.5px;color:#444;letter-spacing:-0.15px;">Notes</div>
<svg class="abs" style="left:644.5px;top:668px;" width="13" height="12" viewBox="0 0 13 12"><path d="M0.500 0.500h11.500v8h-6l-3 3v-3h-2.500z" fill="#666"/></svg>
<div class="t" style="left:661.0px;top:666.5px;height:15px;line-height:15px;font-size:11.5px;color:#444;letter-spacing:-0.20px;">Comments</div>
<div class="abs" style="left:734px;top:664px;width:38px;height:21px;background:#c8c8c8;"></div>
<svg class="abs" style="left:745.5px;top:667px;" width="16" height="13" viewBox="0 0 16 13"><path d="M0.500 0.500h14.500v12h-14.500z" fill="none" stroke="#555" stroke-width="1"/><path d="M4.500 0.500v12M4.500 9h10.500" stroke="#555" stroke-width="1"/><path d="M6.500 2.500h6.500v4.500h-6.500z" fill="none" stroke="#555" stroke-width="0.900"/></svg>
<svg class="abs" style="left:783.5px;top:667px;" width="15" height="13" viewBox="0 0 15 13"><path d="M0.500 0.500h5.500v4.500h-5.500zM9 0.500h5.500v4.500h-5.500zM0.500 8h5.500v4.500h-5.500zM9 8h5.500v4.500h-5.500z" fill="none" stroke="#555" stroke-width="1"/></svg>
<svg class="abs" style="left:821px;top:667px;" width="16" height="13" viewBox="0 0 16 13"><path d="M7.750 1.800c-2-1.400-4.400-1.600-7-0.800v10c2.600-0.800 5-0.600 7 0.800c2-1.400 4.400-1.600 7-0.800v-10c-2.600-0.800-5-0.600-7 0.800z" fill="none" stroke="#555" stroke-width="1"/><path d="M7.750 1.800v10M2.400 3.600h3.600M2.400 5.600h3.600M2.400 7.600h3.600M9.600 3.600h3.600M9.600 5.600h3.600M9.600 7.600h3.600" stroke="#555" stroke-width="0.900"/></svg>
<svg class="abs" style="left:859px;top:667px;" width="15" height="14" viewBox="0 0 15 14"><path d="M0 1h14.500" stroke="#555" stroke-width="1.400"/><path d="M1.800 1.600v6.400h11v-6.400" fill="none" stroke="#555" stroke-width="1"/><path d="M7.250 8v4M4 12.700h6.500" stroke="#555" stroke-width="1.100"/></svg>
<div class="abs" style="left:891px;top:674px;width:6px;height:1.5px;background:#444;"></div>
<div class="abs" style="left:901px;top:674px;width:101px;height:1px;background:#9a9a9a;"></div>
<div class="abs" style="left:951px;top:671px;width:1px;height:7px;background:#9a9a9a;"></div>
<div class="abs" style="left:945px;top:668px;width:3px;height:12px;background:#555;"></div>
<div class="abs" style="left:1005px;top:674px;width:8px;height:1.5px;background:#444;"></div>
<div class="abs" style="left:1008.25px;top:670.75px;width:1.5px;height:8px;background:#444;"></div>
<div class="t" style="left:1028.0px;top:666.5px;height:15px;line-height:15px;font-size:11.5px;color:#444;letter-spacing:-0.84px;">89%</div>
<svg class="abs" style="left:1063px;top:668px;" width="13" height="13" viewBox="0 0 13 13"><path d="M0.500 0.500h12v12h-12z" fill="none" stroke="#666" stroke-width="1"/><path d="M6.500 2v3.200M6.500 11v-3.200M2 6.500h3.200M11 6.500h-3.200" stroke="#666" stroke-width="1"/><path d="M5.200 3.400l1.300-1.400l1.300 1.400M5.200 9.600l1.300 1.400l1.300-1.400M3.400 5.200l-1.400 1.300l1.400 1.300M9.600 5.200l1.400 1.300l-1.400 1.300" fill="none" stroke="#666" stroke-width="0.900"/></svg>
<div class="abs" style="left:0;top:0;width:1px;height:686px;background:#b7472a"></div>
<div class="abs" style="left:1094px;top:0;width:1px;height:686px;background:#b7472a"></div>
<div class="abs" style="left:0;top:685px;width:1095px;height:1px;background:#b7472a"></div>
</div>
</body>
</html>
